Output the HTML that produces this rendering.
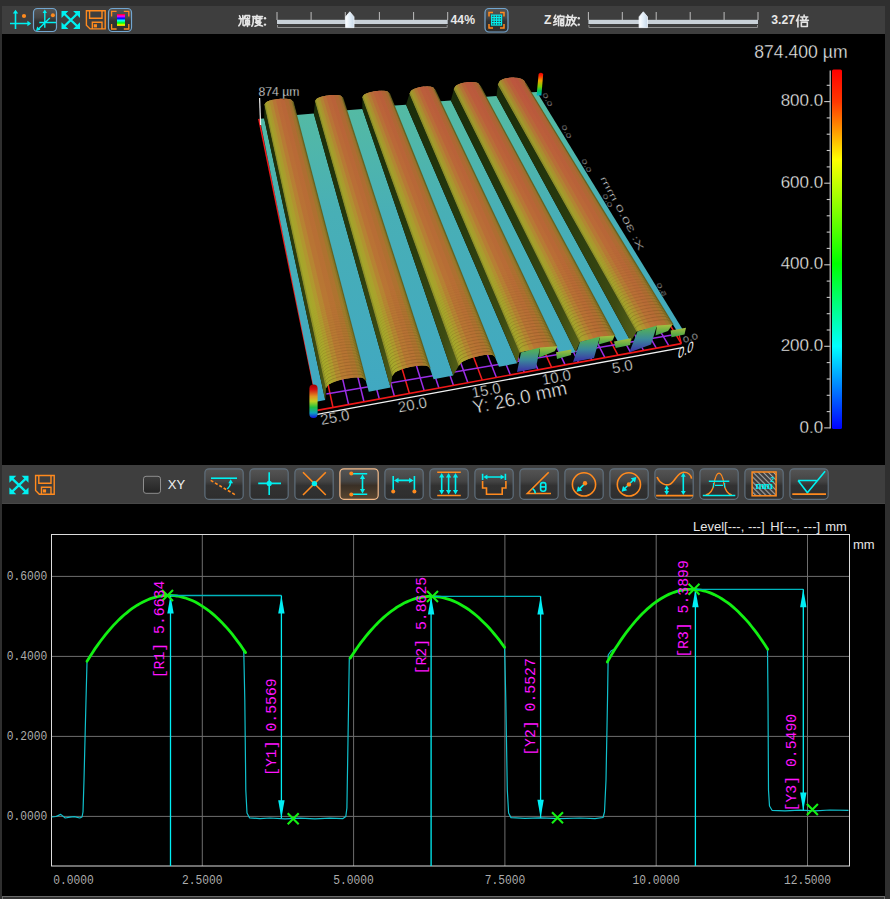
<!DOCTYPE html>
<html><head><meta charset="utf-8"><style>
html,body{margin:0;padding:0;background:#2f2f2f;}
body{width:890px;height:899px;overflow:hidden;position:relative;}
svg{position:absolute;left:0;top:0;}
</style></head><body>
<svg width="890" height="899" viewBox="0 0 890 899">
<defs>
<linearGradient id="gbtn" x1="0" y1="0" x2="0" y2="1">
<stop offset="0" stop-color="#555555"/><stop offset="0.4" stop-color="#444444"/><stop offset="0.55" stop-color="#323232"/><stop offset="1" stop-color="#2e2e2e"/></linearGradient>
<linearGradient id="gbsel" x1="0" y1="0" x2="0" y2="1">
<stop offset="0" stop-color="#555555"/><stop offset="0.4" stop-color="#444444"/><stop offset="0.55" stop-color="#3a3026"/><stop offset="1" stop-color="#5a4630"/></linearGradient>
<linearGradient id="gchk" x1="0" y1="0" x2="0" y2="1"><stop offset="0" stop-color="#3e3e3e"/><stop offset="1" stop-color="#242424"/></linearGradient>
<linearGradient id="gthumb" x1="0" y1="0" x2="1" y2="0"><stop offset="0" stop-color="#ffffff"/><stop offset="0.5" stop-color="#e2eef8"/><stop offset="1" stop-color="#c8d8e8"/></linearGradient>
<linearGradient id="grain" x1="0" y1="0" x2="0" y2="1">
<stop offset="0" stop-color="#ff0000"/><stop offset="0.18" stop-color="#ff00ff"/><stop offset="0.36" stop-color="#0000ff"/><stop offset="0.55" stop-color="#00ffff"/><stop offset="0.75" stop-color="#00ff00"/><stop offset="0.9" stop-color="#e0ff00"/><stop offset="1" stop-color="#ffa000"/></linearGradient>
<pattern id="hatch" width="3.6" height="4" patternUnits="userSpaceOnUse" patternTransform="rotate(-45)">
<rect width="3.6" height="4" fill="#3c3c3c"/><rect width="1.1" height="4" fill="#a8a8a8"/></pattern>
<linearGradient id="gcbs" x1="0" y1="0" x2="0" y2="1"><stop offset="0" stop-color="#e00000"/><stop offset="0.12" stop-color="#ff2000"/><stop offset="0.35" stop-color="#f0a000"/><stop offset="0.6" stop-color="#80d000"/><stop offset="0.8" stop-color="#00c060"/><stop offset="1" stop-color="#00b0d0"/></linearGradient>
<linearGradient id="glens" x1="0" y1="0" x2="0" y2="1"><stop offset="0" stop-color="#a8c040"/><stop offset="1" stop-color="#3ca048"/></linearGradient>
<linearGradient id="gteal" gradientUnits="userSpaceOnUse" x1="0" y1="90" x2="0" y2="400"><stop offset="0" stop-color="#56bca0"/><stop offset="0.4" stop-color="#48afb6"/><stop offset="1" stop-color="#40a8c2"/></linearGradient>
<linearGradient id="gwall" x1="0" y1="0" x2="1" y2="0"><stop offset="0" stop-color="#1a2c0a"/><stop offset="0.5" stop-color="#283a0e"/><stop offset="0.85" stop-color="#3c4a12"/><stop offset="1" stop-color="#525e18"/></linearGradient>
<linearGradient id="gleg" x1="0" y1="0" x2="0" y2="1"><stop offset="0" stop-color="#58b848"/><stop offset="0.5" stop-color="#3a8a9a"/><stop offset="1" stop-color="#3c2ca8"/></linearGradient>
<linearGradient id="gcb" x1="0" y1="0" x2="0" y2="1"><stop offset="0" stop-color="#a00000"/><stop offset="0.15" stop-color="#d01010"/><stop offset="0.35" stop-color="#e09020"/><stop offset="0.5" stop-color="#c0d020"/><stop offset="0.68" stop-color="#20c040"/><stop offset="0.85" stop-color="#10a0c0"/><stop offset="1" stop-color="#1010e0"/></linearGradient>
<linearGradient id="gcbig" x1="0" y1="0" x2="0" y2="1"><stop offset="0" stop-color="#ff0000"/><stop offset="0.09" stop-color="#ff3800"/><stop offset="0.15" stop-color="#ff8000"/><stop offset="0.25" stop-color="#ffff00"/><stop offset="0.54" stop-color="#00ff00"/><stop offset="0.77" stop-color="#00ffff"/><stop offset="1" stop-color="#0000ff"/></linearGradient>
<linearGradient id="gb1_0" x1="0" y1="0" x2="0" y2="1"><stop offset="0" stop-color="#8e8f28"/><stop offset="0.2" stop-color="#8f9128"/><stop offset="0.5" stop-color="#909427"/><stop offset="1" stop-color="#919627"/></linearGradient>
<linearGradient id="gb1_1" x1="0" y1="0" x2="0" y2="1"><stop offset="0" stop-color="#a39f2b"/><stop offset="0.2" stop-color="#a3a22b"/><stop offset="0.5" stop-color="#a5a62b"/><stop offset="1" stop-color="#a6aa2a"/></linearGradient>
<linearGradient id="gb1_2" x1="0" y1="0" x2="0" y2="1"><stop offset="0" stop-color="#aa962e"/><stop offset="0.2" stop-color="#aa9b2d"/><stop offset="0.5" stop-color="#aaa22c"/><stop offset="1" stop-color="#aaa92b"/></linearGradient>
<linearGradient id="gb1_3" x1="0" y1="0" x2="0" y2="1"><stop offset="0" stop-color="#b18732"/><stop offset="0.2" stop-color="#b18e31"/><stop offset="0.5" stop-color="#b0962f"/><stop offset="1" stop-color="#af9e2e"/></linearGradient>
<linearGradient id="gb1_4" x1="0" y1="0" x2="0" y2="1"><stop offset="0" stop-color="#b77536"/><stop offset="0.2" stop-color="#b77c34"/><stop offset="0.5" stop-color="#b68432"/><stop offset="1" stop-color="#b58b31"/></linearGradient>
<linearGradient id="gb1_5" x1="0" y1="0" x2="0" y2="1"><stop offset="0" stop-color="#ba6838"/><stop offset="0.2" stop-color="#b96e36"/><stop offset="0.5" stop-color="#b87434"/><stop offset="1" stop-color="#b87b32"/></linearGradient>
<linearGradient id="gb1_6" x1="0" y1="0" x2="0" y2="1"><stop offset="0" stop-color="#b86538"/><stop offset="0.2" stop-color="#b86a36"/><stop offset="0.5" stop-color="#b76f34"/><stop offset="1" stop-color="#b67532"/></linearGradient>
<linearGradient id="gb1_7" x1="0" y1="0" x2="0" y2="1"><stop offset="0" stop-color="#b06833"/><stop offset="0.2" stop-color="#af6c32"/><stop offset="0.5" stop-color="#af7130"/><stop offset="1" stop-color="#ae762f"/></linearGradient>
<linearGradient id="gb1_8" x1="0" y1="0" x2="0" y2="1"><stop offset="0" stop-color="#a16f2e"/><stop offset="0.2" stop-color="#a0742d"/><stop offset="0.5" stop-color="#9f782b"/><stop offset="1" stop-color="#9e7d2a"/></linearGradient>
<linearGradient id="gb1_9" x1="0" y1="0" x2="0" y2="1"><stop offset="0" stop-color="#8d7029"/><stop offset="0.2" stop-color="#8b7328"/><stop offset="0.5" stop-color="#897626"/><stop offset="1" stop-color="#877925"/></linearGradient>
<linearGradient id="gb2_0" x1="0" y1="0" x2="0" y2="1"><stop offset="0" stop-color="#8d8e28"/><stop offset="0.2" stop-color="#8e9028"/><stop offset="0.5" stop-color="#8f9327"/><stop offset="1" stop-color="#919527"/></linearGradient>
<linearGradient id="gb2_1" x1="0" y1="0" x2="0" y2="1"><stop offset="0" stop-color="#a29c2c"/><stop offset="0.2" stop-color="#a3a02b"/><stop offset="0.5" stop-color="#a4a42b"/><stop offset="1" stop-color="#a5a92a"/></linearGradient>
<linearGradient id="gb2_2" x1="0" y1="0" x2="0" y2="1"><stop offset="0" stop-color="#aa922f"/><stop offset="0.2" stop-color="#aa982e"/><stop offset="0.5" stop-color="#aa9f2d"/><stop offset="1" stop-color="#aaa72c"/></linearGradient>
<linearGradient id="gb2_3" x1="0" y1="0" x2="0" y2="1"><stop offset="0" stop-color="#b28233"/><stop offset="0.2" stop-color="#b18a32"/><stop offset="0.5" stop-color="#b09330"/><stop offset="1" stop-color="#b09c2e"/></linearGradient>
<linearGradient id="gb2_4" x1="0" y1="0" x2="0" y2="1"><stop offset="0" stop-color="#b87137"/><stop offset="0.2" stop-color="#b77835"/><stop offset="0.5" stop-color="#b68133"/><stop offset="1" stop-color="#b58931"/></linearGradient>
<linearGradient id="gb2_5" x1="0" y1="0" x2="0" y2="1"><stop offset="0" stop-color="#ba6539"/><stop offset="0.2" stop-color="#b96b37"/><stop offset="0.5" stop-color="#b97235"/><stop offset="1" stop-color="#b87933"/></linearGradient>
<linearGradient id="gb2_6" x1="0" y1="0" x2="0" y2="1"><stop offset="0" stop-color="#b96139"/><stop offset="0.2" stop-color="#b86737"/><stop offset="0.5" stop-color="#b76d35"/><stop offset="1" stop-color="#b67333"/></linearGradient>
<linearGradient id="gb2_7" x1="0" y1="0" x2="0" y2="1"><stop offset="0" stop-color="#b06634"/><stop offset="0.2" stop-color="#b06a33"/><stop offset="0.5" stop-color="#af6f31"/><stop offset="1" stop-color="#ae742f"/></linearGradient>
<linearGradient id="gb2_8" x1="0" y1="0" x2="0" y2="1"><stop offset="0" stop-color="#a26d2f"/><stop offset="0.2" stop-color="#a1712d"/><stop offset="0.5" stop-color="#9f762c"/><stop offset="1" stop-color="#9e7c2a"/></linearGradient>
<linearGradient id="gb2_9" x1="0" y1="0" x2="0" y2="1"><stop offset="0" stop-color="#8f6e2a"/><stop offset="0.2" stop-color="#8c7129"/><stop offset="0.5" stop-color="#8a7527"/><stop offset="1" stop-color="#887825"/></linearGradient>
<linearGradient id="gb3_0" x1="0" y1="0" x2="0" y2="1"><stop offset="0" stop-color="#8c8d28"/><stop offset="0.2" stop-color="#8d8f28"/><stop offset="0.5" stop-color="#8f9228"/><stop offset="1" stop-color="#909527"/></linearGradient>
<linearGradient id="gb3_1" x1="0" y1="0" x2="0" y2="1"><stop offset="0" stop-color="#a19a2c"/><stop offset="0.2" stop-color="#a29e2b"/><stop offset="0.5" stop-color="#a4a32b"/><stop offset="1" stop-color="#a5a82a"/></linearGradient>
<linearGradient id="gb3_2" x1="0" y1="0" x2="0" y2="1"><stop offset="0" stop-color="#aa8e30"/><stop offset="0.2" stop-color="#aa952e"/><stop offset="0.5" stop-color="#aa9d2d"/><stop offset="1" stop-color="#aaa52c"/></linearGradient>
<linearGradient id="gb3_3" x1="0" y1="0" x2="0" y2="1"><stop offset="0" stop-color="#b27d34"/><stop offset="0.2" stop-color="#b18632"/><stop offset="0.5" stop-color="#b19031"/><stop offset="1" stop-color="#b09a2f"/></linearGradient>
<linearGradient id="gb3_4" x1="0" y1="0" x2="0" y2="1"><stop offset="0" stop-color="#b86c38"/><stop offset="0.2" stop-color="#b77436"/><stop offset="0.5" stop-color="#b67e34"/><stop offset="1" stop-color="#b68732"/></linearGradient>
<linearGradient id="gb3_5" x1="0" y1="0" x2="0" y2="1"><stop offset="0" stop-color="#bb613a"/><stop offset="0.2" stop-color="#ba6838"/><stop offset="0.5" stop-color="#b96f36"/><stop offset="1" stop-color="#b87733"/></linearGradient>
<linearGradient id="gb3_6" x1="0" y1="0" x2="0" y2="1"><stop offset="0" stop-color="#b95e3a"/><stop offset="0.2" stop-color="#b86438"/><stop offset="0.5" stop-color="#b76b36"/><stop offset="1" stop-color="#b77233"/></linearGradient>
<linearGradient id="gb3_7" x1="0" y1="0" x2="0" y2="1"><stop offset="0" stop-color="#b16335"/><stop offset="0.2" stop-color="#b06834"/><stop offset="0.5" stop-color="#af6d32"/><stop offset="1" stop-color="#ae7330"/></linearGradient>
<linearGradient id="gb3_8" x1="0" y1="0" x2="0" y2="1"><stop offset="0" stop-color="#a36a30"/><stop offset="0.2" stop-color="#a16f2e"/><stop offset="0.5" stop-color="#a0752c"/><stop offset="1" stop-color="#9f7a2b"/></linearGradient>
<linearGradient id="gb3_9" x1="0" y1="0" x2="0" y2="1"><stop offset="0" stop-color="#906c2b"/><stop offset="0.2" stop-color="#8e6f29"/><stop offset="0.5" stop-color="#8b7327"/><stop offset="1" stop-color="#887726"/></linearGradient>
<linearGradient id="gb4_0" x1="0" y1="0" x2="0" y2="1"><stop offset="0" stop-color="#8b8b28"/><stop offset="0.2" stop-color="#8d8e28"/><stop offset="0.5" stop-color="#8e9128"/><stop offset="1" stop-color="#909427"/></linearGradient>
<linearGradient id="gb4_1" x1="0" y1="0" x2="0" y2="1"><stop offset="0" stop-color="#a1982c"/><stop offset="0.2" stop-color="#a29c2c"/><stop offset="0.5" stop-color="#a3a12b"/><stop offset="1" stop-color="#a5a62b"/></linearGradient>
<linearGradient id="gb4_2" x1="0" y1="0" x2="0" y2="1"><stop offset="0" stop-color="#aa8a30"/><stop offset="0.2" stop-color="#aa922f"/><stop offset="0.5" stop-color="#aa9a2e"/><stop offset="1" stop-color="#aaa32c"/></linearGradient>
<linearGradient id="gb4_3" x1="0" y1="0" x2="0" y2="1"><stop offset="0" stop-color="#b37835"/><stop offset="0.2" stop-color="#b28233"/><stop offset="0.5" stop-color="#b18c31"/><stop offset="1" stop-color="#b0972f"/></linearGradient>
<linearGradient id="gb4_4" x1="0" y1="0" x2="0" y2="1"><stop offset="0" stop-color="#b96839"/><stop offset="0.2" stop-color="#b87137"/><stop offset="0.5" stop-color="#b77b35"/><stop offset="1" stop-color="#b68532"/></linearGradient>
<linearGradient id="gb4_5" x1="0" y1="0" x2="0" y2="1"><stop offset="0" stop-color="#bb5d3c"/><stop offset="0.2" stop-color="#ba6439"/><stop offset="0.5" stop-color="#b96d37"/><stop offset="1" stop-color="#b87534"/></linearGradient>
<linearGradient id="gb4_6" x1="0" y1="0" x2="0" y2="1"><stop offset="0" stop-color="#b95b3c"/><stop offset="0.2" stop-color="#b96139"/><stop offset="0.5" stop-color="#b86937"/><stop offset="1" stop-color="#b77034"/></linearGradient>
<linearGradient id="gb4_7" x1="0" y1="0" x2="0" y2="1"><stop offset="0" stop-color="#b16036"/><stop offset="0.2" stop-color="#b06634"/><stop offset="0.5" stop-color="#af6c32"/><stop offset="1" stop-color="#af7230"/></linearGradient>
<linearGradient id="gb4_8" x1="0" y1="0" x2="0" y2="1"><stop offset="0" stop-color="#a36730"/><stop offset="0.2" stop-color="#a26d2f"/><stop offset="0.5" stop-color="#a0732d"/><stop offset="1" stop-color="#9f792b"/></linearGradient>
<linearGradient id="gb4_9" x1="0" y1="0" x2="0" y2="1"><stop offset="0" stop-color="#916a2c"/><stop offset="0.2" stop-color="#8f6e2a"/><stop offset="0.5" stop-color="#8c7228"/><stop offset="1" stop-color="#897626"/></linearGradient>
<linearGradient id="gb5_0" x1="0" y1="0" x2="0" y2="1"><stop offset="0" stop-color="#8b8a28"/><stop offset="0.2" stop-color="#8c8d28"/><stop offset="0.5" stop-color="#8e9028"/><stop offset="1" stop-color="#909327"/></linearGradient>
<linearGradient id="gb5_1" x1="0" y1="0" x2="0" y2="1"><stop offset="0" stop-color="#a0962c"/><stop offset="0.2" stop-color="#a19a2c"/><stop offset="0.5" stop-color="#a3a02b"/><stop offset="1" stop-color="#a4a52b"/></linearGradient>
<linearGradient id="gb5_2" x1="0" y1="0" x2="0" y2="1"><stop offset="0" stop-color="#aa8631"/><stop offset="0.2" stop-color="#aa8e2f"/><stop offset="0.5" stop-color="#aa982e"/><stop offset="1" stop-color="#aaa12d"/></linearGradient>
<linearGradient id="gb5_3" x1="0" y1="0" x2="0" y2="1"><stop offset="0" stop-color="#b37436"/><stop offset="0.2" stop-color="#b27e34"/><stop offset="0.5" stop-color="#b18932"/><stop offset="1" stop-color="#b09530"/></linearGradient>
<linearGradient id="gb5_4" x1="0" y1="0" x2="0" y2="1"><stop offset="0" stop-color="#b9633a"/><stop offset="0.2" stop-color="#b86d38"/><stop offset="0.5" stop-color="#b77835"/><stop offset="1" stop-color="#b68333"/></linearGradient>
<linearGradient id="gb5_5" x1="0" y1="0" x2="0" y2="1"><stop offset="0" stop-color="#bb593d"/><stop offset="0.2" stop-color="#bb613a"/><stop offset="0.5" stop-color="#ba6a37"/><stop offset="1" stop-color="#b97434"/></linearGradient>
<linearGradient id="gb5_6" x1="0" y1="0" x2="0" y2="1"><stop offset="0" stop-color="#ba583d"/><stop offset="0.2" stop-color="#b95e3a"/><stop offset="0.5" stop-color="#b86637"/><stop offset="1" stop-color="#b76e34"/></linearGradient>
<linearGradient id="gb5_7" x1="0" y1="0" x2="0" y2="1"><stop offset="0" stop-color="#b15e37"/><stop offset="0.2" stop-color="#b06335"/><stop offset="0.5" stop-color="#b06a33"/><stop offset="1" stop-color="#af7031"/></linearGradient>
<linearGradient id="gb5_8" x1="0" y1="0" x2="0" y2="1"><stop offset="0" stop-color="#a46531"/><stop offset="0.2" stop-color="#a26a30"/><stop offset="0.5" stop-color="#a1712d"/><stop offset="1" stop-color="#9f782b"/></linearGradient>
<linearGradient id="gb5_9" x1="0" y1="0" x2="0" y2="1"><stop offset="0" stop-color="#92682d"/><stop offset="0.2" stop-color="#906c2b"/><stop offset="0.5" stop-color="#8d7129"/><stop offset="1" stop-color="#8a7526"/></linearGradient>
<linearGradient id="gb6_0" x1="0" y1="0" x2="0" y2="1"><stop offset="0" stop-color="#8a8928"/><stop offset="0.2" stop-color="#8c8c28"/><stop offset="0.5" stop-color="#8d8f28"/><stop offset="1" stop-color="#8f9328"/></linearGradient>
<linearGradient id="gb6_1" x1="0" y1="0" x2="0" y2="1"><stop offset="0" stop-color="#a0942d"/><stop offset="0.2" stop-color="#a1992c"/><stop offset="0.5" stop-color="#a29e2b"/><stop offset="1" stop-color="#a4a42b"/></linearGradient>
<linearGradient id="gb6_2" x1="0" y1="0" x2="0" y2="1"><stop offset="0" stop-color="#aa8231"/><stop offset="0.2" stop-color="#aa8b30"/><stop offset="0.5" stop-color="#aa952e"/><stop offset="1" stop-color="#aa9f2d"/></linearGradient>
<linearGradient id="gb6_3" x1="0" y1="0" x2="0" y2="1"><stop offset="0" stop-color="#b36f37"/><stop offset="0.2" stop-color="#b27935"/><stop offset="0.5" stop-color="#b18632"/><stop offset="1" stop-color="#b09330"/></linearGradient>
<linearGradient id="gb6_4" x1="0" y1="0" x2="0" y2="1"><stop offset="0" stop-color="#b95f3b"/><stop offset="0.2" stop-color="#b86939"/><stop offset="0.5" stop-color="#b77536"/><stop offset="1" stop-color="#b68033"/></linearGradient>
<linearGradient id="gb6_5" x1="0" y1="0" x2="0" y2="1"><stop offset="0" stop-color="#bc563e"/><stop offset="0.2" stop-color="#bb5e3b"/><stop offset="0.5" stop-color="#ba6838"/><stop offset="1" stop-color="#b97235"/></linearGradient>
<linearGradient id="gb6_6" x1="0" y1="0" x2="0" y2="1"><stop offset="0" stop-color="#ba543e"/><stop offset="0.2" stop-color="#b95c3b"/><stop offset="0.5" stop-color="#b86438"/><stop offset="1" stop-color="#b76d35"/></linearGradient>
<linearGradient id="gb6_7" x1="0" y1="0" x2="0" y2="1"><stop offset="0" stop-color="#b25b38"/><stop offset="0.2" stop-color="#b16136"/><stop offset="0.5" stop-color="#b06834"/><stop offset="1" stop-color="#af6f31"/></linearGradient>
<linearGradient id="gb6_8" x1="0" y1="0" x2="0" y2="1"><stop offset="0" stop-color="#a56232"/><stop offset="0.2" stop-color="#a36830"/><stop offset="0.5" stop-color="#a16f2e"/><stop offset="1" stop-color="#a0762c"/></linearGradient>
<linearGradient id="gb6_9" x1="0" y1="0" x2="0" y2="1"><stop offset="0" stop-color="#93662e"/><stop offset="0.2" stop-color="#916a2c"/><stop offset="0.5" stop-color="#8d6f29"/><stop offset="1" stop-color="#8a7427"/></linearGradient></defs>
<rect x="0" y="0" width="890" height="899" fill="#2f2f2f"/>
<rect x="2" y="34" width="883" height="431" fill="#000"/>
<rect x="2" y="504" width="883" height="392" fill="#000"/>
<rect x="2.5" y="896.5" width="882" height="10" fill="#333" stroke="#6a6a6a" stroke-width="1"/>
<rect x="2" y="6" width="883" height="28" fill="#3e3e3e"/>
<rect x="2" y="465" width="883" height="39" fill="#3e3e3e"/><rect x="2" y="503" width="883" height="1" fill="#474747"/>
<path d="M15.5,13 V29 M10,23.5 H28" stroke="#00f0f0" stroke-width="1.6"/>
<path d="M15.5,9.8 L12.8,13.6 H18.2 Z M31.2,23.5 L27.4,20.8 V26.2 Z" fill="#00f0f0"/>
<circle cx="24" cy="16" r="2.1" fill="#ff8a1e"/>
<rect x="33.5" y="8.5" width="23" height="23" rx="4" fill="url(#gbtn)" stroke="#72a6d0" stroke-width="1.2"/>
<path d="M44.8,12.5 V27.8 M39.3,22.5 H56 M49.8,18 L38.5,29" stroke="#00f0f0" stroke-width="1.4"/>
<path d="M44.8,9.6 L42.6,13 H47 Z M36,31 L37.2,26.6 L40.4,29.8 Z" fill="#00f0f0"/>
<circle cx="52.9" cy="15.2" r="2" fill="#ff8a1e"/>
<path d="M64.0,13.5 L77.5,26.5 M77.5,13.5 L64.0,26.5" stroke="#00f0f0" stroke-width="2.3"/><path d="M61.5,11 L68.375,11 L61.5,17.875 Z" fill="#00f0f0"/><path d="M80.0,11 L73.125,11 L80.0,17.875 Z" fill="#00f0f0"/><path d="M61.5,29 L68.375,29 L61.5,22.125 Z" fill="#00f0f0"/><path d="M80.0,29 L73.125,29 L80.0,22.125 Z" fill="#00f0f0"/>
<path d="M86.39999999999999,10.8 H105.2 V28.9 H90.1 L86.39999999999999,25.2 Z" fill="none" stroke="#ff8a1e" stroke-width="1.4"/><path d="M89.6,10.8 V18.274 H102.0 V10.8" fill="none" stroke="#ff8a1e" stroke-width="1.4"/><path d="M92.332,28.9 V22.214 H102.0 V28.9" fill="none" stroke="#ff8a1e" stroke-width="1.4"/><rect x="93.75999999999999" y="24.183999999999997" width="3.2" height="3.2" fill="#ff8a1e"/>
<rect x="108.5" y="8.5" width="23" height="23" rx="4" fill="url(#gbtn)" stroke="#72a6d0" stroke-width="1.2"/>
<path d="M111.6,16.4 V11.4 H116.6 M123.79999999999998,11.4 H128.79999999999998 V16.4 M128.79999999999998,24.0 V29.0 H123.79999999999998 M116.6,29.0 H111.6 V24.0" fill="none" stroke="#ff8a1e" stroke-width="1.3"/>
<rect x="117" y="14" width="8" height="12" fill="url(#grain)"/>
<path transform="translate(238,14.6) scale(1.0)" d="M1.5,1.2 L2.3,3 M4.8,1 L4.8,3.2 M7,1.2 L6.4,3 M1,4.2 H6.8 M3,4.2 V6.5 Q2.8,9.5 0.8,11.2 M5,4.2 V10.5 Q5,11.2 6.8,11 M7.2,1 H11.6 V2.6 M7.2,1 V2.6 M7.5,4.2 H11.5 M9.5,3 V11.8 M7.6,6 H11.4 L11.4,8.6 H7.6 Z M7,10.2 H11.8" fill="none" stroke="#e4e4e4" stroke-width="1.60" stroke-linecap="round" stroke-linejoin="round"/>
<path transform="translate(251,14.6) scale(1.0)" d="M6,0.6 V1.8 M1.6,2 H11.5 M2.2,2 V7 Q2,10 0.8,11.6 M3.8,4 H11 M5.2,3 V6.5 M9,3 V6.5 M5.2,6.2 H9 M4.5,7.8 H10 Q8.5,10.5 4,11.6 M5.5,8.5 Q8,10.8 11.5,11.4" fill="none" stroke="#e4e4e4" stroke-width="1.60" stroke-linecap="round" stroke-linejoin="round"/>
<circle cx="265" cy="18.2" r="1.2" fill="#e4e4e4"/><circle cx="265" cy="24.6" r="1.2" fill="#e4e4e4"/>
<rect x="277" y="19.8" width="170.7" height="4.2" fill="#c9d1d8"/>
<line x1="277.0" y1="12" x2="277.0" y2="20" stroke="#bdbdbd" stroke-width="1"/>
<line x1="311.1" y1="12" x2="311.1" y2="20" stroke="#bdbdbd" stroke-width="1"/>
<line x1="345.3" y1="12" x2="345.3" y2="20" stroke="#bdbdbd" stroke-width="1"/>
<line x1="379.4" y1="12" x2="379.4" y2="20" stroke="#bdbdbd" stroke-width="1"/>
<line x1="413.6" y1="12" x2="413.6" y2="20" stroke="#bdbdbd" stroke-width="1"/>
<line x1="447.7" y1="12" x2="447.7" y2="20" stroke="#bdbdbd" stroke-width="1"/>
<path d="M277.5,25 V27.5 H447.2 V25" fill="none" stroke="#8e8e8e" stroke-width="1"/>
<path d="M345.6,27.6 V16.8 L349.8,11.8 L354.0,16.8 V27.6 Z" fill="url(#gthumb)" stroke="#f0f6fc" stroke-width="0.8"/>
<text x="450.6" y="24" font-family="Liberation Sans" font-weight="bold" font-size="12.2" fill="#e8e8e8">44%</text>
<rect x="485.0" y="8.5" width="23" height="23.5" rx="4" fill="url(#gbtn)" stroke="#72a6d0" stroke-width="1.2"/>
<path d="M489,16.5 V12.5 H493 M500,12.5 H504 V16.5 M504,24.0 V28.0 H500 M493,28.0 H489 V24.0" fill="none" stroke="#ff8a1e" stroke-width="1.5"/>
<g stroke="#00f0f0" stroke-width="1.1" fill="none"><rect x="491.6" y="15.1" width="10" height="10"/><path d="M494.1,15.1 V25.1 M496.6,15.1 V25.1 M499.1,15.1 V25.1 M491.6,17.6 H501.6 M491.6,20.1 H501.6 M491.6,22.6 H501.6"/></g>
<text x="544" y="24.2" font-family="Liberation Sans" font-weight="bold" font-size="12.2" fill="#e8e8e8">Z</text>
<path transform="translate(552.8,14.6) scale(0.9666666666666667)" d="M3,0.6 L1.2,3.8 L3.6,4.2 L1,8 L4,7.2 M0.8,10.8 L4,9.6 M7.8,0.6 V1.6 M5,3 V1.8 H11.6 V3 M6.4,3.6 L5.4,6 M6,5.2 V11.6 M8,4.6 H11.6 M9.2,4.8 L8.8,6 M8.2,6.2 H11.2 V11.4 H8.2 Z M8.2,8.8 H11.2" fill="none" stroke="#e4e4e4" stroke-width="1.66" stroke-linecap="round" stroke-linejoin="round"/>
<path transform="translate(565.2,14.6) scale(0.9666666666666667)" d="M2.6,0.6 L3.4,1.8 M0.8,2.6 H5.8 M2.4,2.6 V5.4 H5 Q5,10 3.4,11.4 L2.6,11 M2.4,5.4 Q2.4,9.6 0.6,11.6 M7.6,0.6 Q7,3.6 5.8,5.6 M7,3 H11.6 M10.4,3.2 Q9.6,8.4 6,11.6 M7.2,5 Q8.6,9.4 11.8,11.4" fill="none" stroke="#e4e4e4" stroke-width="1.66" stroke-linecap="round" stroke-linejoin="round"/>
<circle cx="578.8" cy="18.2" r="1.2" fill="#e4e4e4"/><circle cx="578.8" cy="24.6" r="1.2" fill="#e4e4e4"/>
<rect x="588.4" y="19.8" width="169.60000000000002" height="4.2" fill="#c9d1d8"/>
<line x1="588.4" y1="12" x2="588.4" y2="20" stroke="#bdbdbd" stroke-width="1"/>
<line x1="622.3" y1="12" x2="622.3" y2="20" stroke="#bdbdbd" stroke-width="1"/>
<line x1="656.2" y1="12" x2="656.2" y2="20" stroke="#bdbdbd" stroke-width="1"/>
<line x1="690.2" y1="12" x2="690.2" y2="20" stroke="#bdbdbd" stroke-width="1"/>
<line x1="724.1" y1="12" x2="724.1" y2="20" stroke="#bdbdbd" stroke-width="1"/>
<line x1="758.0" y1="12" x2="758.0" y2="20" stroke="#bdbdbd" stroke-width="1"/>
<path d="M588.9,25 V27.5 H757.5 V25" fill="none" stroke="#8e8e8e" stroke-width="1"/>
<path d="M639.0999999999999,27.6 V16.8 L643.3,11.8 L647.5,16.8 V27.6 Z" fill="url(#gthumb)" stroke="#f0f6fc" stroke-width="0.8"/>
<text x="771.3" y="24.2" font-family="Liberation Sans" font-weight="bold" font-size="12.2" fill="#e8e8e8">3.27</text>
<path transform="translate(795.8,14.4) scale(1.0666666666666667)" d="M3,0.6 Q2,4 0.6,6 M2,4 V11.8 M7.8,0.6 V1.8 M4.6,2.4 H11.2 M6,3.2 L6.8,5 M10,3.2 L9.2,5 M4.2,5.6 H11.8 M5.2,7.4 H10.8 V11.4 H5.2 Z" fill="none" stroke="#e4e4e4" stroke-width="1.50" stroke-linecap="round" stroke-linejoin="round"/>
<path d="M11.9,478.3 L26.0,491.8 M26.0,478.3 L11.9,491.8" stroke="#00f0f0" stroke-width="2.3"/><path d="M9.4,475.8 L16.275,475.8 L9.4,482.675 Z" fill="#00f0f0"/><path d="M28.5,475.8 L21.625,475.8 L28.5,482.675 Z" fill="#00f0f0"/><path d="M9.4,494.3 L16.275,494.3 L9.4,487.425 Z" fill="#00f0f0"/><path d="M28.5,494.3 L21.625,494.3 L28.5,487.425 Z" fill="#00f0f0"/>
<path d="M35.599999999999994,475.5 H54.2 V494.2 H39.3 L35.599999999999994,490.5 Z" fill="none" stroke="#ff8a1e" stroke-width="1.4"/><path d="M38.8,475.5 V483.226 H51.0 V475.5" fill="none" stroke="#ff8a1e" stroke-width="1.4"/><path d="M41.465999999999994,494.2 V487.286 H51.0 V494.2" fill="none" stroke="#ff8a1e" stroke-width="1.4"/><rect x="42.879999999999995" y="489.316" width="3.2" height="3.2" fill="#ff8a1e"/>
<rect x="143.5" y="476.3" width="17" height="17" rx="2.5" fill="url(#gchk)" stroke="#8e8e8e" stroke-width="1"/>
<text x="167.8" y="489.4" font-family="Liberation Sans" font-size="13" fill="#f0f0f0">XY</text>
<rect x="204.9" y="468.8" width="38.3" height="30.5" rx="4" fill="url(#gbtn)" stroke="#5f6f7c" stroke-width="1.2"/>
<rect x="249.9" y="468.8" width="38.3" height="30.5" rx="4" fill="url(#gbtn)" stroke="#5f6f7c" stroke-width="1.2"/>
<rect x="294.9" y="468.8" width="38.3" height="30.5" rx="4" fill="url(#gbtn)" stroke="#5f6f7c" stroke-width="1.2"/>
<rect x="339.9" y="468.8" width="38.3" height="30.5" rx="4" fill="url(#gbsel)" stroke="#f2ba8a" stroke-width="1.2"/>
<rect x="384.9" y="468.8" width="38.3" height="30.5" rx="4" fill="url(#gbtn)" stroke="#5f6f7c" stroke-width="1.2"/>
<rect x="429.9" y="468.8" width="38.3" height="30.5" rx="4" fill="url(#gbtn)" stroke="#5f6f7c" stroke-width="1.2"/>
<rect x="474.9" y="468.8" width="38.3" height="30.5" rx="4" fill="url(#gbtn)" stroke="#5f6f7c" stroke-width="1.2"/>
<rect x="519.9" y="468.8" width="38.3" height="30.5" rx="4" fill="url(#gbtn)" stroke="#5f6f7c" stroke-width="1.2"/>
<rect x="564.9" y="468.8" width="38.3" height="30.5" rx="4" fill="url(#gbtn)" stroke="#5f6f7c" stroke-width="1.2"/>
<rect x="609.9" y="468.8" width="38.3" height="30.5" rx="4" fill="url(#gbtn)" stroke="#5f6f7c" stroke-width="1.2"/>
<rect x="654.9" y="468.8" width="38.3" height="30.5" rx="4" fill="url(#gbtn)" stroke="#5f6f7c" stroke-width="1.2"/>
<rect x="699.9" y="468.8" width="38.3" height="30.5" rx="4" fill="url(#gbtn)" stroke="#5f6f7c" stroke-width="1.2"/>
<rect x="744.9" y="468.8" width="38.3" height="30.5" rx="4" fill="url(#gbtn)" stroke="#5f6f7c" stroke-width="1.2"/>
<rect x="789.9" y="468.8" width="38.3" height="30.5" rx="4" fill="url(#gbtn)" stroke="#5f6f7c" stroke-width="1.2"/>
<path d="M211,478.2 H237" stroke="#00f0f0" stroke-width="1.6" fill="none"/>
<path d="M210.7,480.4 L234.9,494.6" stroke="#ff8a1e" stroke-width="1.6" stroke-dasharray="3,2"/>
<path d="M227.3,489 Q230.6,486 230.7,482.5" stroke="#00f0f0" stroke-width="1.6" fill="none"/>
<path d="M230.70,479.20 L233.10,483.20 L228.30,483.20 Z" fill="#00f0f0"/>
<path d="M269.2,472.2 V495 M258.2,483.4 H281" stroke="#00f0f0" stroke-width="1.6" fill="none"/>
<circle cx="269.2" cy="483.4" r="2.6" fill="#00f0f0"/>
<path d="M303,472.2 L325.8,495 M325.8,472.2 L303,495" stroke="#ff8a1e" stroke-width="1.6" fill="none"/>
<circle cx="314.4" cy="483.6" r="2.7" fill="#00f0f0"/>
<path d="M351.5,473.8 H367.2 M351.5,494.2 H367.2 M362.5,477 V491" stroke="#00f0f0" stroke-width="1.6" fill="none"/>
<path d="M362.50,474.50 L365.10,479.00 L359.90,479.00 Z" fill="#00f0f0"/><path d="M362.50,493.50 L359.90,489.00 L365.10,489.00 Z" fill="#00f0f0"/>
<circle cx="351.3" cy="473.6" r="2" fill="#ff8a1e"/><circle cx="351.3" cy="494.4" r="2" fill="#ff8a1e"/>
<path d="M393.2,476 V491 M414.4,476 V491 M396,480.4 H411.6" stroke="#00f0f0" stroke-width="1.6" fill="none"/>
<path d="M394.00,480.40 L398.50,477.80 L398.50,483.00 Z" fill="#00f0f0"/><path d="M413.60,480.40 L409.10,483.00 L409.10,477.80 Z" fill="#00f0f0"/>
<circle cx="393.2" cy="491.4" r="2" fill="#ff8a1e"/><circle cx="414.4" cy="491.4" r="2" fill="#ff8a1e"/>
<path d="M437.2,472.2 H460.8 M437.2,495.5 H460.8" stroke="#ff8a1e" stroke-width="1.6" fill="none"/>
<path d="M441.7,476 V492" stroke="#00f0f0" stroke-width="1.6" fill="none"/>
<path d="M441.70,473.00 L444.30,477.50 L439.10,477.50 Z" fill="#00f0f0"/><path d="M441.70,494.60 L439.10,490.10 L444.30,490.10 Z" fill="#00f0f0"/>
<path d="M448.6,476 V492" stroke="#00f0f0" stroke-width="1.6" fill="none"/>
<path d="M448.60,473.00 L451.20,477.50 L446.00,477.50 Z" fill="#00f0f0"/><path d="M448.60,494.60 L446.00,490.10 L451.20,490.10 Z" fill="#00f0f0"/>
<path d="M455.5,476 V492" stroke="#00f0f0" stroke-width="1.6" fill="none"/>
<path d="M455.50,473.00 L458.10,477.50 L452.90,477.50 Z" fill="#00f0f0"/><path d="M455.50,494.60 L452.90,490.10 L458.10,490.10 Z" fill="#00f0f0"/>
<path d="M482.6,473.8 V480.1 M505.4,473.8 V480.1 M485,477 H503" stroke="#00f0f0" stroke-width="1.6" fill="none"/>
<path d="M483.40,477.00 L487.40,474.60 L487.40,479.40 Z" fill="#00f0f0"/><path d="M504.60,477.00 L500.60,479.40 L500.60,474.60 Z" fill="#00f0f0"/>
<path d="M482.6,481 V488 H486.5 V494.2 H502.2 V488 H505.9 V481" stroke="#ff8a1e" stroke-width="1.6" fill="none"/>
<path d="M548.7,472.2 L527.4,493.5 H551" stroke="#ff8a1e" stroke-width="1.6" fill="none"/>
<path d="M532.6,488.6 Q535.5,490.5 535.2,493.3" stroke="#00f0f0" stroke-width="1.6" fill="none"/>
<rect x="540.6" y="482.6" width="5.2" height="8.6" rx="2.2" stroke="#00f0f0" stroke-width="1.6" fill="none"/><path d="M540.6,486.9 H545.8" stroke="#00f0f0" stroke-width="1.6" fill="none"/>
<circle cx="584" cy="484.4" r="11.6" stroke="#ff8a1e" stroke-width="1.6" fill="none"/>
<path d="M584,484.4 L578.5,489.9" stroke="#00f0f0" stroke-width="1.6" fill="none"/>
<path d="M576.60,491.80 L578.01,486.14 L582.26,490.39 Z" fill="#00f0f0"/>
<circle cx="585" cy="483.3" r="2.2" fill="#ff8a1e"/>
<circle cx="628.9" cy="484.4" r="11.6" stroke="#ff8a1e" stroke-width="1.6" fill="none"/>
<path d="M624.5,488.8 L633.3,480" stroke="#00f0f0" stroke-width="1.6" fill="none"/>
<path d="M621.60,491.70 L623.01,486.04 L627.26,490.29 Z" fill="#00f0f0"/><path d="M636.40,476.90 L634.99,482.56 L630.74,478.31 Z" fill="#00f0f0"/>
<circle cx="628.9" cy="484.4" r="2.2" fill="#ff8a1e"/>
<path d="M657,477 C660,484 666,486 670,484.2 C675,482 677,472.5 683.7,472.3 C688,472.2 691,475 691.6,478.6" stroke="#ff8a1e" stroke-width="1.6" fill="none"/>
<path d="M656.1,495.6 H693.1" stroke="#ff8a1e" stroke-width="1.8"/>
<path d="M666.7,488 V492.5 M683.3,476 V492.5" stroke="#00f0f0" stroke-width="1.6" fill="none"/>
<path d="M666.70,485.20 L669.10,489.20 L664.30,489.20 Z" fill="#00f0f0"/><path d="M666.70,495.00 L664.30,491.00 L669.10,491.00 Z" fill="#00f0f0"/>
<path d="M683.30,472.80 L685.70,476.80 L680.90,476.80 Z" fill="#00f0f0"/><path d="M683.30,495.00 L680.90,491.00 L685.70,491.00 Z" fill="#00f0f0"/>
<path d="M705.7,495 C711,494 713,489 714,484 C715,478 716.2,473.2 719,473.2 C721.8,473.2 723,478 724,484 C725,489 727,494 731.8,495" stroke="#ff8a1e" stroke-width="1.3" fill="none"/>
<path d="M708.8,481.3 H729.3 M702.8,495.5 H735.3" stroke="#00f0f0" stroke-width="1.6"/>
<path d="M713.5,483 V487.5 M724.6,483 V487.5 M715,485.3 H723" stroke="#00f0f0" stroke-width="1.2"/>
<rect x="752.1" y="472" width="24" height="23.8" fill="url(#hatch)"/>
<rect x="752.1" y="472" width="24" height="23.8" fill="none" stroke="#ff8a1e" stroke-width="1.5"/>
<text x="755.5" y="488.5" font-family="Liberation Serif" font-size="11" fill="#00f0f0" font-weight="bold" letter-spacing="-0.8">mm</text>
<text x="770.2" y="481.5" font-family="Liberation Sans" font-size="7" fill="#00f0f0" font-weight="bold">2</text>
<path d="M798.1,480.5 H816.7 M798.1,480.5 L807.4,492.7 L825.1,471.3" stroke="#00f0f0" stroke-width="1.6" fill="none" stroke-linejoin="miter"/>
<path d="M792.3,494.2 H826" stroke="#ff8a1e" stroke-width="1.7"/>
<g>
<line x1="681.3" y1="343.6" x2="657.2" y2="303.6" stroke="#ee1c1c" stroke-width="1.5"/>
<line x1="668.9" y1="345.9" x2="645.3" y2="305.9" stroke="#9a2ee6" stroke-width="1.5"/>
<line x1="656.3" y1="348.2" x2="633.3" y2="308.2" stroke="#9a2ee6" stroke-width="1.5"/>
<line x1="643.6" y1="350.5" x2="621.3" y2="310.5" stroke="#9a2ee6" stroke-width="1.5"/>
<line x1="630.8" y1="352.9" x2="609.1" y2="312.9" stroke="#9a2ee6" stroke-width="1.5"/>
<line x1="617.9" y1="355.2" x2="596.8" y2="315.2" stroke="#ee1c1c" stroke-width="1.5"/>
<line x1="604.9" y1="357.6" x2="584.4" y2="317.6" stroke="#9a2ee6" stroke-width="1.5"/>
<line x1="591.8" y1="360.0" x2="571.8" y2="320.0" stroke="#9a2ee6" stroke-width="1.5"/>
<line x1="578.5" y1="362.5" x2="559.2" y2="322.5" stroke="#9a2ee6" stroke-width="1.5"/>
<line x1="565.1" y1="364.9" x2="546.4" y2="324.9" stroke="#9a2ee6" stroke-width="1.5"/>
<line x1="551.6" y1="367.4" x2="533.5" y2="327.4" stroke="#ee1c1c" stroke-width="1.5"/>
<line x1="538.0" y1="369.9" x2="520.5" y2="329.9" stroke="#9a2ee6" stroke-width="1.5"/>
<line x1="524.3" y1="372.4" x2="507.4" y2="332.4" stroke="#9a2ee6" stroke-width="1.5"/>
<line x1="510.4" y1="375.0" x2="494.1" y2="335.0" stroke="#9a2ee6" stroke-width="1.5"/>
<line x1="496.4" y1="377.5" x2="480.7" y2="337.5" stroke="#9a2ee6" stroke-width="1.5"/>
<line x1="482.2" y1="380.1" x2="467.2" y2="340.1" stroke="#ee1c1c" stroke-width="1.5"/>
<line x1="467.9" y1="382.8" x2="453.5" y2="342.8" stroke="#9a2ee6" stroke-width="1.5"/>
<line x1="453.5" y1="385.4" x2="439.7" y2="345.4" stroke="#9a2ee6" stroke-width="1.5"/>
<line x1="438.9" y1="388.1" x2="425.8" y2="348.1" stroke="#9a2ee6" stroke-width="1.5"/>
<line x1="424.2" y1="390.8" x2="411.8" y2="350.8" stroke="#9a2ee6" stroke-width="1.5"/>
<line x1="409.4" y1="393.5" x2="397.6" y2="353.5" stroke="#ee1c1c" stroke-width="1.5"/>
<line x1="394.4" y1="396.2" x2="383.2" y2="356.2" stroke="#9a2ee6" stroke-width="1.5"/>
<line x1="379.3" y1="399.0" x2="368.7" y2="359.0" stroke="#9a2ee6" stroke-width="1.5"/>
<line x1="364.0" y1="401.8" x2="354.1" y2="361.8" stroke="#9a2ee6" stroke-width="1.5"/>
<line x1="348.6" y1="404.7" x2="339.3" y2="364.7" stroke="#9a2ee6" stroke-width="1.5"/>
<line x1="333.0" y1="407.5" x2="324.4" y2="367.5" stroke="#ee1c1c" stroke-width="1.5"/>
<line x1="326.3" y1="393.9" x2="681" y2="333.4" stroke="#9a2ee6" stroke-width="1.5"/>
<line x1="317.2" y1="410.4" x2="681.3" y2="343.6" stroke="#f01818" stroke-width="1.6"/>
<line x1="317.2" y1="414.4" x2="682.3" y2="347.6" stroke="#f2f2f2" stroke-width="1.4"/>
</g>
<line x1="258.8" y1="118.8" x2="313.3" y2="384.5" stroke="#f01818" stroke-width="1.5"/>
<path d="M681.3,343.6 L678.3,331.6" stroke="#f01818" stroke-width="1.5"/>
<path d="M259.8,118.8 L264.2,118.4 L325.2,400.1 L316.4,401.8 Z" fill="url(#gteal)"/>
<path d="M293.5,115.3 L313.8,113.6 L390.5,387.6 L368.8,391.7 Z" fill="url(#gteal)"/>
<path d="M343.7,110.4 L362.4,108.9 L453.2,375.6 L433.6,379.3 Z" fill="url(#gteal)"/>
<path d="M391.3,105.8 L406.1,104.7 L517.2,363.3 L499.0,366.8 Z" fill="url(#gteal)"/>
<path d="M437.3,101.4 L450.9,100.4 L575.6,352.1 L560.7,355.0 Z" fill="url(#gteal)"/>
<path d="M483.0,97.0 L496.5,96.0 L630.7,341.6 L619.1,343.8 Z" fill="url(#gteal)"/>
<path d="M528.2,92.6 L536.9,92.1 L683.9,331.4 L677.9,332.5 Z" fill="url(#gteal)"/>
<path d="M264.2,118.4 L264.6,104.3 L326.0,387.9 L325.2,400.1 Z" fill="url(#gwall)"/>
<path d="M264.6,104.3 L326.0,387.9 L328.5,384.6 L331.0,383.2 L333.5,382.1 L336.0,381.2 L338.5,380.4 L341.0,379.7 L343.4,379.2 L345.9,378.6 L348.4,378.2 L350.9,377.9 L353.4,377.6 L355.9,377.4 L358.4,377.4 L360.8,377.5 L363.3,378.0 L365.8,380.4 L365.8,380.4 L293.0,101.6 L291.2,99.7 L289.4,99.1 L287.6,98.9 L285.9,98.7 L284.1,98.7 L282.3,98.7 L280.5,98.8 L278.8,98.9 L277.0,99.1 L275.2,99.4 L273.5,99.7 L271.7,100.1 L269.9,100.6 L268.1,101.2 L266.4,102.0 L264.6,104.3 Z" fill="#b08a48"/>
<path d="M264.6,104.3 L265.3,103.4 L266.0,102.5 L328.0,385.2 L327.0,386.6 L326.0,387.9 Z" fill="url(#gb1_0)"/>
<path d="M265.4,103.2 L266.6,101.9 L267.7,101.4 L330.4,383.5 L328.8,384.4 L327.2,386.3 Z" fill="url(#gb1_1)"/>
<path d="M267.2,101.6 L268.6,101.0 L270.0,100.5 L333.6,382.1 L331.6,382.9 L329.6,384.0 Z" fill="url(#gb1_2)"/>
<path d="M269.4,100.7 L271.1,100.2 L272.8,99.8 L337.6,380.7 L335.2,381.5 L332.8,382.4 Z" fill="url(#gb1_3)"/>
<path d="M272.3,99.9 L274.2,99.5 L276.2,99.2 L342.3,379.4 L339.6,380.1 L336.8,380.9 Z" fill="url(#gb1_4)"/>
<path d="M275.7,99.3 L278.1,99.0 L280.5,98.8 L348.3,378.2 L344.9,378.9 L341.6,379.6 Z" fill="url(#gb1_5)"/>
<path d="M279.9,98.8 L282.3,98.7 L284.7,98.7 L354.3,377.5 L350.9,377.9 L347.5,378.4 Z" fill="url(#gb1_6)"/>
<path d="M284.2,98.7 L286.4,98.8 L288.7,99.0 L359.8,377.5 L356.7,377.4 L353.5,377.6 Z" fill="url(#gb1_7)"/>
<path d="M288.1,98.9 L289.7,99.2 L291.3,99.7 L363.4,378.1 L361.2,377.6 L359.1,377.4 Z" fill="url(#gb1_8)"/>
<path d="M290.7,99.5 L291.8,100.4 L293.0,101.6 L365.8,380.4 L364.2,378.9 L362.6,377.9 Z" fill="url(#gb1_9)"/>
<path d="M325.4,384.7 L329.3,380.5 L333.3,378.7 L337.2,377.4 L341.2,376.3 L345.2,375.5 L349.1,374.8 L353.1,374.4 L357.1,374.2 L361.0,374.5 L365.0,377.2" fill="none" stroke="#4a3410" stroke-width="0.8" opacity="0.29"/>
<path d="M324.7,381.6 L328.6,377.4 L332.6,375.6 L336.5,374.2 L340.5,373.2 L344.4,372.3 L348.4,371.7 L352.3,371.2 L356.3,371.1 L360.2,371.4 L364.2,374.1" fill="none" stroke="#4a3410" stroke-width="0.8" opacity="0.28"/>
<path d="M324.0,378.5 L327.9,374.2 L331.9,372.5 L335.8,371.1 L339.7,370.1 L343.7,369.2 L347.6,368.6 L351.5,368.1 L355.5,368.0 L359.4,368.2 L363.3,371.0" fill="none" stroke="#4a3410" stroke-width="0.8" opacity="0.26"/>
<path d="M323.3,375.4 L327.3,371.2 L331.2,369.4 L335.1,368.1 L339.0,367.0 L342.9,366.2 L346.9,365.5 L350.8,365.1 L354.7,364.9 L358.6,365.2 L362.5,367.9" fill="none" stroke="#4a3410" stroke-width="0.8" opacity="0.25"/>
<path d="M322.7,372.4 L326.6,368.2 L330.5,366.4 L334.4,365.0 L338.3,364.0 L342.2,363.1 L346.1,362.5 L350.0,362.0 L353.9,361.9 L357.8,362.2 L361.8,364.9" fill="none" stroke="#4a3410" stroke-width="0.8" opacity="0.24"/>
<path d="M322.0,369.4 L325.9,365.2 L329.8,363.4 L333.7,362.1 L337.6,361.0 L341.5,360.1 L345.4,359.5 L349.3,359.1 L353.2,358.9 L357.1,359.2 L361.0,361.9" fill="none" stroke="#4a3410" stroke-width="0.8" opacity="0.23"/>
<path d="M321.4,366.4 L325.3,362.2 L329.2,360.4 L333.0,359.1 L336.9,358.0 L340.8,357.2 L344.7,356.5 L348.6,356.1 L352.4,355.9 L356.3,356.2 L360.2,358.9" fill="none" stroke="#4a3410" stroke-width="0.8" opacity="0.22"/>
<path d="M320.8,363.5 L324.6,359.3 L328.5,357.5 L332.4,356.2 L336.2,355.1 L340.1,354.3 L344.0,353.6 L347.8,353.2 L351.7,353.0 L355.6,353.3 L359.4,356.0" fill="none" stroke="#4a3410" stroke-width="0.8" opacity="0.21"/>
<path d="M320.1,360.7 L324.0,356.4 L327.9,354.7 L331.7,353.3 L335.6,352.3 L339.4,351.4 L343.3,350.8 L347.1,350.3 L351.0,350.2 L354.8,350.4 L358.7,353.2" fill="none" stroke="#4a3410" stroke-width="0.8" opacity="0.20"/>
<path d="M319.5,357.8 L323.4,353.6 L327.2,351.8 L331.1,350.5 L334.9,349.4 L338.7,348.6 L342.6,347.9 L346.4,347.5 L350.3,347.3 L354.1,347.6 L358.0,350.3" fill="none" stroke="#4a3410" stroke-width="0.8" opacity="0.18"/>
<path d="M318.9,355.0 L322.8,350.8 L326.6,349.0 L330.4,347.7 L334.2,346.6 L338.1,345.8 L341.9,345.1 L345.7,344.7 L349.6,344.5 L353.4,344.8 L357.2,347.5" fill="none" stroke="#4a3410" stroke-width="0.8" opacity="0.17"/>
<path d="M318.3,352.3 L322.1,348.0 L326.0,346.3 L329.8,344.9 L333.6,343.9 L337.4,343.0 L341.2,342.4 L345.0,341.9 L348.9,341.8 L352.7,342.0 L356.5,344.8" fill="none" stroke="#4a3410" stroke-width="0.8" opacity="0.16"/>
<path d="M317.7,349.5 L321.5,345.3 L325.3,343.5 L329.2,342.2 L333.0,341.1 L336.8,340.3 L340.6,339.6 L344.4,339.2 L348.2,339.0 L352.0,339.3 L355.8,342.0" fill="none" stroke="#4a3410" stroke-width="0.8" opacity="0.15"/>
<path d="M317.2,346.9 L320.9,342.6 L324.7,340.9 L328.5,339.5 L332.3,338.5 L336.1,337.6 L339.9,337.0 L343.7,336.5 L347.5,336.4 L351.3,336.6 L355.1,339.4" fill="none" stroke="#4a3410" stroke-width="0.8" opacity="0.14"/>
<path d="M316.6,344.2 L320.4,340.0 L324.1,338.2 L327.9,336.9 L331.7,335.8 L335.5,335.0 L339.3,334.3 L343.1,333.9 L346.8,333.7 L350.6,334.0 L354.4,336.7" fill="none" stroke="#4a3410" stroke-width="0.8" opacity="0.13"/>
<path d="M316.0,341.6 L319.8,337.4 L323.6,335.6 L327.3,334.3 L331.1,333.2 L334.9,332.4 L338.6,331.7 L342.4,331.3 L346.2,331.1 L349.9,331.4 L353.7,334.1" fill="none" stroke="#4a3410" stroke-width="0.8" opacity="0.12"/>
<path d="M315.5,339.0 L319.2,334.8 L323.0,333.0 L326.7,331.7 L330.5,330.6 L334.3,329.8 L338.0,329.1 L341.8,328.7 L345.5,328.5 L349.3,328.8 L353.0,331.5" fill="none" stroke="#4a3410" stroke-width="0.8" opacity="0.11"/>
<path d="M314.9,336.5 L318.7,332.3 L322.4,330.5 L326.2,329.2 L329.9,328.1 L333.6,327.3 L337.4,326.6 L341.1,326.2 L344.9,326.0 L348.6,326.3 L352.4,329.0" fill="none" stroke="#4a3410" stroke-width="0.8" opacity="0.10"/>
<path d="M314.4,334.0 L318.1,329.8 L321.8,328.0 L325.6,326.7 L329.3,325.6 L333.1,324.8 L336.8,324.1 L340.5,323.7 L344.3,323.5 L348.0,323.8 L351.7,326.5" fill="none" stroke="#4a3410" stroke-width="0.8" opacity="0.09"/>
<path d="M313.8,331.6 L317.6,327.4 L321.3,325.6 L325.0,324.2 L328.7,323.2 L332.5,322.3 L336.2,321.7 L339.9,321.2 L343.6,321.1 L347.4,321.4 L351.1,324.1" fill="none" stroke="#4a3410" stroke-width="0.8" opacity="0.08"/>
<path d="M313.3,329.2 L317.0,324.9 L320.7,323.2 L324.5,321.8 L328.2,320.8 L331.9,319.9 L335.6,319.3 L339.3,318.8 L343.0,318.7 L346.7,318.9 L350.5,321.7" fill="none" stroke="#4a3410" stroke-width="0.8" opacity="0.07"/>
<path d="M312.8,326.8 L316.5,322.6 L320.2,320.8 L323.9,319.5 L327.6,318.4 L331.3,317.5 L335.0,316.9 L338.7,316.5 L342.4,316.3 L346.1,316.6 L349.8,319.3" fill="none" stroke="#4a3410" stroke-width="0.8" opacity="0.06"/>
<path d="M312.3,324.5 L316.0,320.2 L319.7,318.5 L323.4,317.1 L327.1,316.1 L330.8,315.2 L334.5,314.6 L338.2,314.1 L341.8,314.0 L345.5,314.2 L349.2,317.0" fill="none" stroke="#4a3410" stroke-width="0.8" opacity="0.05"/>
<path d="M311.8,322.2 L315.5,317.9 L319.2,316.2 L322.9,314.8 L326.5,313.8 L330.2,312.9 L333.9,312.3 L337.6,311.8 L341.3,311.7 L344.9,311.9 L348.6,314.7" fill="none" stroke="#4a3410" stroke-width="0.8" opacity="0.04"/>
<path d="M311.3,319.9 L315.0,315.7 L318.7,313.9 L322.3,312.6 L326.0,311.5 L329.7,310.6 L333.3,310.0 L337.0,309.6 L340.7,309.4 L344.4,309.7 L348.0,312.4" fill="none" stroke="#4a3410" stroke-width="0.8" opacity="0.03"/>
<path d="M310.8,317.7 L314.5,313.5 L318.2,311.7 L321.8,310.3 L325.5,309.3 L329.1,308.4 L332.8,307.8 L336.5,307.3 L340.1,307.2 L343.8,307.5 L347.5,310.2" fill="none" stroke="#4a3410" stroke-width="0.8" opacity="0.03"/>
<path d="M310.4,315.5 L314.0,311.3 L317.7,309.5 L321.3,308.2 L325.0,307.1 L328.6,306.2 L332.3,305.6 L335.9,305.2 L339.6,305.0 L343.2,305.3 L346.9,308.0" fill="none" stroke="#4a3410" stroke-width="0.8" opacity="0.02"/>
<path d="M309.9,313.4 L313.5,309.1 L317.2,307.4 L320.8,306.0 L324.5,305.0 L328.1,304.1 L331.8,303.5 L335.4,303.0 L339.0,302.9 L342.7,303.1 L346.3,305.9" fill="none" stroke="#4a3410" stroke-width="0.8" opacity="0.01"/>
<path d="M309.4,311.2 L313.1,307.0 L316.7,305.2 L320.3,303.9 L324.0,302.8 L327.6,302.0 L331.2,301.3 L334.9,300.9 L338.5,300.7 L342.1,301.0 L345.8,303.7" fill="none" stroke="#4a3410" stroke-width="0.8" opacity="0.01"/>
<line x1="264.6" y1="104.3" x2="326.0" y2="387.9" stroke="#8c9428" stroke-width="1" opacity="0.35"/>
<line x1="293.0" y1="101.6" x2="365.8" y2="380.4" stroke="#5a5a1c" stroke-width="1.2" opacity="0.8"/>
<path d="M313.8,113.6 L315.2,100.7 L392.3,376.0 L390.5,387.6 Z" fill="url(#gwall)"/>
<path d="M315.2,100.7 L392.3,376.0 L394.6,372.7 L397.0,371.3 L399.4,370.2 L401.7,369.3 L404.1,368.5 L406.5,367.8 L408.8,367.3 L411.2,366.8 L413.6,366.3 L415.9,366.0 L418.3,365.7 L420.7,365.5 L423.0,365.5 L425.4,365.6 L427.8,366.1 L430.1,368.5 L430.1,368.5 L342.5,97.4 L340.8,95.7 L339.1,95.2 L337.4,95.0 L335.7,94.9 L334.0,94.9 L332.3,95.0 L330.6,95.1 L328.8,95.3 L327.1,95.5 L325.4,95.8 L323.7,96.2 L322.0,96.6 L320.3,97.1 L318.6,97.7 L316.9,98.5 L315.2,100.7 Z" fill="#b08a48"/>
<path d="M315.2,100.7 L315.9,99.8 L316.6,99.0 L394.2,373.3 L393.2,374.7 L392.3,376.0 Z" fill="url(#gb2_0)"/>
<path d="M316.0,99.7 L317.1,98.4 L318.2,97.9 L396.4,371.6 L394.9,372.5 L393.4,374.4 Z" fill="url(#gb2_1)"/>
<path d="M317.7,98.2 L319.0,97.6 L320.4,97.1 L399.5,370.2 L397.6,371.0 L395.7,372.1 Z" fill="url(#gb2_2)"/>
<path d="M319.8,97.3 L321.5,96.7 L323.1,96.3 L403.3,368.8 L401.0,369.6 L398.7,370.5 Z" fill="url(#gb2_3)"/>
<path d="M322.6,96.4 L324.5,96.0 L326.4,95.7 L407.8,367.5 L405.2,368.2 L402.5,369.0 Z" fill="url(#gb2_4)"/>
<path d="M325.8,95.8 L328.2,95.4 L330.5,95.1 L413.5,366.3 L410.3,367.0 L407.0,367.7 Z" fill="url(#gb2_5)"/>
<path d="M329.9,95.2 L332.3,95.0 L334.6,94.9 L419.2,365.6 L415.9,366.0 L412.7,366.5 Z" fill="url(#gb2_6)"/>
<path d="M334.0,94.9 L336.2,95.0 L338.4,95.1 L424.5,365.6 L421.4,365.5 L418.4,365.7 Z" fill="url(#gb2_7)"/>
<path d="M337.9,95.1 L339.4,95.3 L340.9,95.7 L427.9,366.2 L425.8,365.7 L423.7,365.5 Z" fill="url(#gb2_8)"/>
<path d="M340.3,95.5 L341.4,96.3 L342.5,97.4 L430.1,368.5 L428.6,367.0 L427.1,366.0 Z" fill="url(#gb2_9)"/>
<path d="M391.4,372.8 L395.2,368.6 L398.9,366.8 L402.7,365.5 L406.5,364.4 L410.3,363.6 L414.0,362.9 L417.8,362.5 L421.6,362.3 L425.3,362.6 L429.1,365.3" fill="none" stroke="#4a3410" stroke-width="0.8" opacity="0.29"/>
<path d="M390.5,369.7 L394.3,365.5 L398.0,363.7 L401.8,362.3 L405.5,361.3 L409.3,360.4 L413.1,359.8 L416.8,359.3 L420.6,359.2 L424.3,359.5 L428.1,362.2" fill="none" stroke="#4a3410" stroke-width="0.8" opacity="0.28"/>
<path d="M389.6,366.6 L393.4,362.3 L397.1,360.6 L400.9,359.2 L404.6,358.2 L408.4,357.3 L412.1,356.7 L415.9,356.2 L419.6,356.1 L423.4,356.3 L427.1,359.1" fill="none" stroke="#4a3410" stroke-width="0.8" opacity="0.26"/>
<path d="M388.8,363.5 L392.5,359.3 L396.2,357.5 L400.0,356.2 L403.7,355.1 L407.4,354.3 L411.2,353.6 L414.9,353.2 L418.6,353.0 L422.4,353.3 L426.1,356.0" fill="none" stroke="#4a3410" stroke-width="0.8" opacity="0.25"/>
<path d="M387.9,360.5 L391.7,356.3 L395.4,354.5 L399.1,353.1 L402.8,352.1 L406.5,351.2 L410.3,350.6 L414.0,350.1 L417.7,350.0 L421.4,350.3 L425.1,353.0" fill="none" stroke="#4a3410" stroke-width="0.8" opacity="0.24"/>
<path d="M387.1,357.5 L390.8,353.3 L394.5,351.5 L398.2,350.2 L401.9,349.1 L405.6,348.2 L409.3,347.6 L413.0,347.2 L416.8,347.0 L420.5,347.3 L424.2,350.0" fill="none" stroke="#4a3410" stroke-width="0.8" opacity="0.23"/>
<path d="M386.3,354.5 L390.0,350.3 L393.7,348.5 L397.4,347.2 L401.0,346.1 L404.7,345.3 L408.4,344.6 L412.1,344.2 L415.8,344.0 L419.5,344.3 L423.2,347.0" fill="none" stroke="#4a3410" stroke-width="0.8" opacity="0.22"/>
<path d="M385.5,351.6 L389.1,347.4 L392.8,345.6 L396.5,344.3 L400.2,343.2 L403.9,342.4 L407.5,341.7 L411.2,341.3 L414.9,341.1 L418.6,341.4 L422.3,344.1" fill="none" stroke="#4a3410" stroke-width="0.8" opacity="0.21"/>
<path d="M384.7,348.8 L388.3,344.5 L392.0,342.8 L395.7,341.4 L399.3,340.4 L403.0,339.5 L406.7,338.9 L410.3,338.4 L414.0,338.3 L417.7,338.5 L421.3,341.3" fill="none" stroke="#4a3410" stroke-width="0.8" opacity="0.20"/>
<path d="M383.9,345.9 L387.5,341.7 L391.2,339.9 L394.8,338.6 L398.5,337.5 L402.1,336.7 L405.8,336.0 L409.5,335.6 L413.1,335.4 L416.8,335.7 L420.4,338.4" fill="none" stroke="#4a3410" stroke-width="0.8" opacity="0.18"/>
<path d="M383.1,343.1 L386.7,338.9 L390.4,337.1 L394.0,335.8 L397.7,334.7 L401.3,333.9 L404.9,333.2 L408.6,332.8 L412.2,332.6 L415.9,332.9 L419.5,335.6" fill="none" stroke="#4a3410" stroke-width="0.8" opacity="0.17"/>
<path d="M382.3,340.4 L385.9,336.1 L389.6,334.4 L393.2,333.0 L396.8,332.0 L400.5,331.1 L404.1,330.5 L407.7,330.0 L411.4,329.9 L415.0,330.1 L418.6,332.9" fill="none" stroke="#4a3410" stroke-width="0.8" opacity="0.16"/>
<path d="M381.5,337.6 L385.2,333.4 L388.8,331.6 L392.4,330.3 L396.0,329.2 L399.6,328.4 L403.3,327.7 L406.9,327.3 L410.5,327.1 L414.1,327.4 L417.7,330.1" fill="none" stroke="#4a3410" stroke-width="0.8" opacity="0.15"/>
<path d="M380.8,335.0 L384.4,330.7 L388.0,329.0 L391.6,327.6 L395.2,326.6 L398.8,325.7 L402.4,325.1 L406.1,324.6 L409.7,324.5 L413.3,324.7 L416.9,327.5" fill="none" stroke="#4a3410" stroke-width="0.8" opacity="0.14"/>
<path d="M380.0,332.3 L383.6,328.1 L387.2,326.3 L390.8,325.0 L394.4,323.9 L398.0,323.1 L401.6,322.4 L405.2,322.0 L408.8,321.8 L412.4,322.1 L416.0,324.8" fill="none" stroke="#4a3410" stroke-width="0.8" opacity="0.13"/>
<path d="M379.3,329.7 L382.9,325.5 L386.5,323.7 L390.1,322.4 L393.7,321.3 L397.3,320.5 L400.8,319.8 L404.4,319.4 L408.0,319.2 L411.6,319.5 L415.2,322.2" fill="none" stroke="#4a3410" stroke-width="0.8" opacity="0.12"/>
<path d="M378.6,327.1 L382.2,322.9 L385.8,321.1 L389.3,319.8 L392.9,318.7 L396.5,317.9 L400.1,317.2 L403.6,316.8 L407.2,316.6 L410.8,316.9 L414.4,319.6" fill="none" stroke="#4a3410" stroke-width="0.8" opacity="0.11"/>
<path d="M377.9,324.6 L381.5,320.4 L385.0,318.6 L388.6,317.3 L392.2,316.2 L395.7,315.4 L399.3,314.7 L402.8,314.3 L406.4,314.1 L410.0,314.4 L413.5,317.1" fill="none" stroke="#4a3410" stroke-width="0.8" opacity="0.10"/>
<path d="M377.2,322.1 L380.8,317.9 L384.3,316.1 L387.9,314.8 L391.4,313.7 L395.0,312.9 L398.5,312.2 L402.1,311.8 L405.6,311.6 L409.2,311.9 L412.7,314.6" fill="none" stroke="#4a3410" stroke-width="0.8" opacity="0.09"/>
<path d="M376.5,319.7 L380.1,315.5 L383.6,313.7 L387.1,312.3 L390.7,311.3 L394.2,310.4 L397.8,309.8 L401.3,309.3 L404.9,309.2 L408.4,309.5 L411.9,312.2" fill="none" stroke="#4a3410" stroke-width="0.8" opacity="0.08"/>
<path d="M375.8,317.3 L379.4,313.0 L382.9,311.3 L386.4,309.9 L390.0,308.9 L393.5,308.0 L397.0,307.4 L400.6,306.9 L404.1,306.8 L407.6,307.0 L411.2,309.8" fill="none" stroke="#4a3410" stroke-width="0.8" opacity="0.07"/>
<path d="M375.2,314.9 L378.7,310.7 L382.2,308.9 L385.7,307.6 L389.3,306.5 L392.8,305.6 L396.3,305.0 L399.8,304.6 L403.3,304.4 L406.9,304.7 L410.4,307.4" fill="none" stroke="#4a3410" stroke-width="0.8" opacity="0.06"/>
<path d="M374.5,312.6 L378.0,308.3 L381.5,306.6 L385.1,305.2 L388.6,304.2 L392.1,303.3 L395.6,302.7 L399.1,302.2 L402.6,302.1 L406.1,302.3 L409.6,305.1" fill="none" stroke="#4a3410" stroke-width="0.8" opacity="0.05"/>
<path d="M373.9,310.3 L377.4,306.0 L380.9,304.3 L384.4,302.9 L387.9,301.9 L391.4,301.0 L394.9,300.4 L398.4,299.9 L401.9,299.8 L405.4,300.0 L408.9,302.8" fill="none" stroke="#4a3410" stroke-width="0.8" opacity="0.04"/>
<path d="M373.2,308.0 L376.7,303.8 L380.2,302.0 L383.7,300.7 L387.2,299.6 L390.7,298.8 L394.2,298.1 L397.7,297.7 L401.2,297.5 L404.7,297.8 L408.2,300.5" fill="none" stroke="#4a3410" stroke-width="0.8" opacity="0.03"/>
<path d="M372.6,305.8 L376.1,301.6 L379.6,299.8 L383.1,298.4 L386.5,297.4 L390.0,296.5 L393.5,295.9 L397.0,295.4 L400.5,295.3 L404.0,295.6 L407.4,298.3" fill="none" stroke="#4a3410" stroke-width="0.8" opacity="0.03"/>
<path d="M372.0,303.6 L375.5,299.4 L379.0,297.6 L382.4,296.3 L385.9,295.2 L389.4,294.3 L392.8,293.7 L396.3,293.3 L399.8,293.1 L403.3,293.4 L406.7,296.1" fill="none" stroke="#4a3410" stroke-width="0.8" opacity="0.02"/>
<path d="M371.4,301.5 L374.9,297.2 L378.3,295.5 L381.8,294.1 L385.3,293.1 L388.7,292.2 L392.2,291.6 L395.7,291.1 L399.1,291.0 L402.6,291.2 L406.0,294.0" fill="none" stroke="#4a3410" stroke-width="0.8" opacity="0.01"/>
<path d="M370.8,299.3 L374.3,295.1 L377.7,293.3 L381.2,292.0 L384.6,290.9 L388.1,290.1 L391.5,289.4 L395.0,289.0 L398.5,288.8 L401.9,289.1 L405.4,291.8" fill="none" stroke="#4a3410" stroke-width="0.8" opacity="0.01"/>
<line x1="315.2" y1="100.7" x2="392.3" y2="376.0" stroke="#8c9428" stroke-width="1" opacity="0.35"/>
<line x1="342.5" y1="97.4" x2="430.1" y2="368.5" stroke="#5a5a1c" stroke-width="1.2" opacity="0.8"/>
<path d="M362.4,108.9 L362.4,97.0 L458.8,365.8 L453.2,375.6 Z" fill="url(#gwall)"/>
<path d="M362.4,97.0 L458.8,365.8 L461.1,362.7 L463.3,361.3 L465.6,360.2 L467.9,359.2 L470.1,358.4 L472.4,357.7 L474.7,357.0 L477.0,356.5 L479.2,355.9 L481.5,355.5 L483.8,355.1 L486.0,354.9 L488.3,354.7 L490.6,354.7 L492.8,355.0 L495.1,357.1 L495.1,357.1 L389.3,93.5 L387.6,91.6 L386.0,91.1 L384.3,90.8 L382.6,90.7 L380.9,90.7 L379.2,90.8 L377.5,90.9 L375.9,91.1 L374.2,91.3 L372.5,91.7 L370.8,92.0 L369.1,92.5 L367.4,93.0 L365.8,93.7 L364.1,94.6 L362.4,97.0 Z" fill="#b08a48"/>
<path d="M362.4,97.0 L363.1,96.0 L363.7,95.1 L460.6,363.3 L459.7,364.5 L458.8,365.8 Z" fill="url(#gb3_0)"/>
<path d="M363.2,95.9 L364.3,94.5 L365.4,93.9 L462.8,361.6 L461.3,362.5 L459.9,364.3 Z" fill="url(#gb3_1)"/>
<path d="M364.8,94.2 L366.2,93.5 L367.5,93.0 L465.7,360.1 L463.9,361.0 L462.1,362.0 Z" fill="url(#gb3_2)"/>
<path d="M367.0,93.2 L368.6,92.7 L370.2,92.2 L469.3,358.7 L467.2,359.5 L465.0,360.5 Z" fill="url(#gb3_3)"/>
<path d="M369.7,92.3 L371.5,91.9 L373.4,91.5 L473.7,357.3 L471.1,358.1 L468.6,359.0 Z" fill="url(#gb3_4)"/>
<path d="M372.9,91.6 L375.2,91.2 L377.5,90.9 L479.1,356.0 L476.1,356.7 L473.0,357.5 Z" fill="url(#gb3_5)"/>
<path d="M376.9,91.0 L379.2,90.8 L381.5,90.7 L484.6,355.1 L481.5,355.5 L478.4,356.1 Z" fill="url(#gb3_6)"/>
<path d="M381.0,90.7 L383.1,90.8 L385.3,91.0 L489.7,354.7 L486.8,354.8 L483.9,355.1 Z" fill="url(#gb3_7)"/>
<path d="M384.7,90.9 L386.2,91.2 L387.7,91.6 L492.9,355.1 L490.9,354.8 L488.9,354.7 Z" fill="url(#gb3_8)"/>
<path d="M387.2,91.4 L388.2,92.3 L389.3,93.5 L495.1,357.1 L493.7,355.8 L492.2,355.0 Z" fill="url(#gb3_9)"/>
<path d="M457.7,362.6 L461.3,358.6 L464.9,356.8 L468.5,355.4 L472.1,354.2 L475.7,353.3 L479.4,352.5 L483.0,351.9 L486.6,351.6 L490.2,351.6 L493.8,353.9" fill="none" stroke="#4a3410" stroke-width="0.8" opacity="0.29"/>
<path d="M456.5,359.5 L460.1,355.4 L463.7,353.6 L467.3,352.2 L471.0,351.1 L474.6,350.1 L478.2,349.3 L481.8,348.8 L485.4,348.4 L489.0,348.5 L492.6,350.8" fill="none" stroke="#4a3410" stroke-width="0.8" opacity="0.28"/>
<path d="M455.4,356.4 L459.0,352.3 L462.6,350.5 L466.2,349.1 L469.8,348.0 L473.4,347.0 L477.0,346.2 L480.6,345.7 L484.1,345.3 L487.7,345.4 L491.3,347.7" fill="none" stroke="#4a3410" stroke-width="0.8" opacity="0.26"/>
<path d="M454.3,353.3 L457.9,349.3 L461.5,347.5 L465.1,346.1 L468.6,344.9 L472.2,344.0 L475.8,343.2 L479.4,342.6 L482.9,342.3 L486.5,342.3 L490.1,344.6" fill="none" stroke="#4a3410" stroke-width="0.8" opacity="0.25"/>
<path d="M453.2,350.3 L456.8,346.3 L460.4,344.4 L463.9,343.0 L467.5,341.9 L471.1,340.9 L474.6,340.2 L478.2,339.6 L481.8,339.2 L485.3,339.3 L488.9,341.6" fill="none" stroke="#4a3410" stroke-width="0.8" opacity="0.24"/>
<path d="M452.2,347.3 L455.7,343.3 L459.3,341.5 L462.8,340.1 L466.4,338.9 L469.9,337.9 L473.5,337.2 L477.0,336.6 L480.6,336.2 L484.1,336.3 L487.7,338.6" fill="none" stroke="#4a3410" stroke-width="0.8" opacity="0.23"/>
<path d="M451.1,344.3 L454.6,340.3 L458.2,338.5 L461.7,337.1 L465.3,336.0 L468.8,335.0 L472.3,334.2 L475.9,333.6 L479.4,333.3 L483.0,333.4 L486.5,335.6" fill="none" stroke="#4a3410" stroke-width="0.8" opacity="0.22"/>
<path d="M450.1,341.4 L453.6,337.4 L457.1,335.6 L460.6,334.2 L464.2,333.0 L467.7,332.1 L471.2,331.3 L474.8,330.7 L478.3,330.4 L481.8,330.4 L485.3,332.7" fill="none" stroke="#4a3410" stroke-width="0.8" opacity="0.21"/>
<path d="M449.0,338.6 L452.5,334.5 L456.1,332.7 L459.6,331.3 L463.1,330.2 L466.6,329.2 L470.1,328.4 L473.6,327.8 L477.2,327.5 L480.7,327.6 L484.2,329.9" fill="none" stroke="#4a3410" stroke-width="0.8" opacity="0.20"/>
<path d="M448.0,335.7 L451.5,331.7 L455.0,329.9 L458.5,328.5 L462.0,327.3 L465.5,326.4 L469.0,325.6 L472.5,325.0 L476.0,324.7 L479.5,324.7 L483.0,327.0" fill="none" stroke="#4a3410" stroke-width="0.8" opacity="0.18"/>
<path d="M447.0,332.9 L450.5,328.9 L454.0,327.1 L457.5,325.7 L461.0,324.5 L464.5,323.6 L468.0,322.8 L471.4,322.2 L474.9,321.9 L478.4,321.9 L481.9,324.2" fill="none" stroke="#4a3410" stroke-width="0.8" opacity="0.17"/>
<path d="M446.0,330.2 L449.5,326.1 L453.0,324.3 L456.5,322.9 L459.9,321.8 L463.4,320.8 L466.9,320.0 L470.4,319.5 L473.9,319.1 L477.3,319.2 L480.8,321.5" fill="none" stroke="#4a3410" stroke-width="0.8" opacity="0.16"/>
<path d="M445.0,327.4 L448.5,323.4 L452.0,321.6 L455.4,320.2 L458.9,319.1 L462.4,318.1 L465.9,317.3 L469.3,316.7 L472.8,316.4 L476.3,316.5 L479.7,318.7" fill="none" stroke="#4a3410" stroke-width="0.8" opacity="0.15"/>
<path d="M444.1,324.8 L447.5,320.7 L451.0,318.9 L454.5,317.5 L457.9,316.4 L461.4,315.4 L464.8,314.6 L468.3,314.1 L471.7,313.7 L475.2,313.8 L478.6,316.1" fill="none" stroke="#4a3410" stroke-width="0.8" opacity="0.14"/>
<path d="M443.1,322.1 L446.6,318.1 L450.0,316.3 L453.5,314.9 L456.9,313.7 L460.4,312.8 L463.8,312.0 L467.3,311.4 L470.7,311.1 L474.1,311.1 L477.6,313.4" fill="none" stroke="#4a3410" stroke-width="0.8" opacity="0.13"/>
<path d="M442.2,319.5 L445.6,315.5 L449.1,313.7 L452.5,312.3 L455.9,311.1 L459.4,310.2 L462.8,309.4 L466.2,308.8 L469.7,308.5 L473.1,308.5 L476.5,310.8" fill="none" stroke="#4a3410" stroke-width="0.8" opacity="0.12"/>
<path d="M441.3,316.9 L444.7,312.9 L448.1,311.1 L451.5,309.7 L455.0,308.6 L458.4,307.6 L461.8,306.8 L465.2,306.2 L468.7,305.9 L472.1,306.0 L475.5,308.2" fill="none" stroke="#4a3410" stroke-width="0.8" opacity="0.11"/>
<path d="M440.4,314.4 L443.8,310.4 L447.2,308.6 L450.6,307.2 L454.0,306.0 L457.4,305.1 L460.8,304.3 L464.3,303.7 L467.7,303.4 L471.1,303.4 L474.5,305.7" fill="none" stroke="#4a3410" stroke-width="0.8" opacity="0.10"/>
<path d="M439.5,311.9 L442.9,307.9 L446.3,306.1 L449.7,304.7 L453.1,303.5 L456.5,302.6 L459.9,301.8 L463.3,301.2 L466.7,300.9 L470.1,300.9 L473.5,303.2" fill="none" stroke="#4a3410" stroke-width="0.8" opacity="0.09"/>
<path d="M438.6,309.5 L442.0,305.5 L445.4,303.6 L448.8,302.2 L452.2,301.1 L455.6,300.1 L458.9,299.4 L462.3,298.8 L465.7,298.4 L469.1,298.5 L472.5,300.8" fill="none" stroke="#4a3410" stroke-width="0.8" opacity="0.08"/>
<path d="M437.7,307.1 L441.1,303.0 L444.5,301.2 L447.9,299.8 L451.3,298.7 L454.6,297.7 L458.0,296.9 L461.4,296.4 L464.8,296.0 L468.2,296.1 L471.5,298.4" fill="none" stroke="#4a3410" stroke-width="0.8" opacity="0.07"/>
<path d="M436.9,304.7 L440.3,300.7 L443.6,298.9 L447.0,297.5 L450.4,296.3 L453.7,295.3 L457.1,294.6 L460.5,294.0 L463.9,293.6 L467.2,293.7 L470.6,296.0" fill="none" stroke="#4a3410" stroke-width="0.8" opacity="0.06"/>
<path d="M436.0,302.4 L439.4,298.3 L442.8,296.5 L446.1,295.1 L449.5,294.0 L452.8,293.0 L456.2,292.2 L459.6,291.6 L462.9,291.3 L466.3,291.4 L469.7,293.7" fill="none" stroke="#4a3410" stroke-width="0.8" opacity="0.05"/>
<path d="M435.2,300.1 L438.6,296.0 L441.9,294.2 L445.3,292.8 L448.6,291.7 L452.0,290.7 L455.3,289.9 L458.7,289.3 L462.0,289.0 L465.4,289.1 L468.7,291.4" fill="none" stroke="#4a3410" stroke-width="0.8" opacity="0.04"/>
<path d="M434.4,297.8 L437.8,293.8 L441.1,292.0 L444.4,290.6 L447.8,289.4 L451.1,288.5 L454.5,287.7 L457.8,287.1 L461.1,286.7 L464.5,286.8 L467.8,289.1" fill="none" stroke="#4a3410" stroke-width="0.8" opacity="0.03"/>
<path d="M433.6,295.6 L436.9,291.6 L440.3,289.7 L443.6,288.3 L446.9,287.2 L450.3,286.2 L453.6,285.5 L456.9,284.9 L460.3,284.5 L463.6,284.6 L466.9,286.9" fill="none" stroke="#4a3410" stroke-width="0.8" opacity="0.03"/>
<path d="M432.8,293.4 L436.2,289.4 L439.5,287.6 L442.8,286.2 L446.1,285.0 L449.4,284.0 L452.8,283.3 L456.1,282.7 L459.4,282.3 L462.7,282.4 L466.1,284.7" fill="none" stroke="#4a3410" stroke-width="0.8" opacity="0.02"/>
<path d="M432.1,291.3 L435.4,287.2 L438.7,285.4 L442.0,284.0 L445.3,282.9 L448.6,281.9 L451.9,281.1 L455.3,280.5 L458.6,280.2 L461.9,280.3 L465.2,282.6" fill="none" stroke="#4a3410" stroke-width="0.8" opacity="0.01"/>
<path d="M431.3,289.1 L434.6,285.1 L437.9,283.3 L441.2,281.9 L444.5,280.8 L447.8,279.8 L451.1,279.0 L454.4,278.4 L457.7,278.1 L461.0,278.2 L464.4,280.4" fill="none" stroke="#4a3410" stroke-width="0.8" opacity="0.01"/>
<line x1="362.4" y1="97.0" x2="458.8" y2="365.8" stroke="#8c9428" stroke-width="1" opacity="0.35"/>
<line x1="389.3" y1="93.5" x2="495.1" y2="357.1" stroke="#5a5a1c" stroke-width="1.2" opacity="0.8"/>
<path d="M406.1,104.7 L409.6,93.4 L519.8,352.5 L517.2,363.3 Z" fill="url(#gwall)"/>
<path d="M409.6,93.4 L519.8,352.5 L522.1,351.7 L524.5,351.2 L526.8,350.8 L529.1,350.4 L531.4,350.0 L533.7,349.6 L536.0,349.2 L538.3,348.8 L540.6,348.5 L542.9,348.2 L545.3,347.8 L547.6,347.5 L549.9,347.2 L552.2,347.0 L554.5,346.7 L556.8,346.8 L556.8,346.8 L434.8,89.8 L433.3,87.5 L431.7,86.9 L430.1,86.6 L428.5,86.4 L427.0,86.3 L425.4,86.4 L423.8,86.5 L422.2,86.7 L420.7,87.0 L419.1,87.3 L417.5,87.7 L415.9,88.2 L414.4,88.8 L412.8,89.6 L411.2,90.6 L409.6,93.4 Z" fill="#b08a48"/>
<path d="M409.6,93.4 L410.3,92.3 L410.9,91.2 L521.7,351.9 L520.8,352.2 L519.8,352.5 Z" fill="url(#gb4_0)"/>
<path d="M410.4,92.1 L411.4,90.5 L412.4,89.8 L523.9,351.4 L522.4,351.7 L520.9,352.1 Z" fill="url(#gb4_1)"/>
<path d="M411.9,90.2 L413.2,89.4 L414.4,88.8 L526.9,350.8 L525.0,351.1 L523.2,351.5 Z" fill="url(#gb4_2)"/>
<path d="M413.9,89.0 L415.4,88.4 L416.9,87.9 L530.6,350.1 L528.3,350.5 L526.1,350.9 Z" fill="url(#gb4_3)"/>
<path d="M416.4,88.0 L418.2,87.5 L420.0,87.1 L535.0,349.4 L532.4,349.8 L529.8,350.2 Z" fill="url(#gb4_4)"/>
<path d="M419.5,87.2 L421.6,86.8 L423.7,86.5 L540.5,348.5 L537.4,349.0 L534.3,349.5 Z" fill="url(#gb4_5)"/>
<path d="M423.2,86.6 L425.4,86.4 L427.5,86.4 L546.1,347.7 L542.9,348.2 L539.8,348.6 Z" fill="url(#gb4_6)"/>
<path d="M427.0,86.3 L429.0,86.4 L431.0,86.7 L551.3,347.1 L548.3,347.4 L545.3,347.8 Z" fill="url(#gb4_7)"/>
<path d="M430.5,86.6 L431.9,87.0 L433.3,87.6 L554.6,346.7 L552.6,346.9 L550.5,347.2 Z" fill="url(#gb4_8)"/>
<path d="M432.8,87.3 L433.8,88.3 L434.8,89.8 L556.8,346.8 L555.3,346.8 L553.9,346.8 Z" fill="url(#gb4_9)"/>
<path d="M518.5,349.3 L522.2,346.2 L525.8,344.9 L529.5,343.9 L533.2,343.1 L536.9,342.5 L540.6,342.0 L544.3,341.6 L547.9,341.5 L551.6,341.7 L555.3,343.6" fill="none" stroke="#4a3410" stroke-width="0.8" opacity="0.29"/>
<path d="M517.1,346.2 L520.8,343.1 L524.5,341.8 L528.1,340.8 L531.8,340.0 L535.5,339.3 L539.1,338.8 L542.8,338.5 L546.5,338.3 L550.1,338.5 L553.8,340.5" fill="none" stroke="#4a3410" stroke-width="0.8" opacity="0.28"/>
<path d="M515.8,343.1 L519.5,340.0 L523.1,338.7 L526.8,337.7 L530.4,336.9 L534.1,336.2 L537.7,335.7 L541.4,335.4 L545.0,335.2 L548.7,335.4 L552.3,337.4" fill="none" stroke="#4a3410" stroke-width="0.8" opacity="0.26"/>
<path d="M514.5,340.0 L518.2,336.9 L521.8,335.6 L525.4,334.6 L529.1,333.8 L532.7,333.2 L536.3,332.7 L540.0,332.3 L543.6,332.2 L547.2,332.4 L550.9,334.3" fill="none" stroke="#4a3410" stroke-width="0.8" opacity="0.25"/>
<path d="M513.2,337.0 L516.9,333.9 L520.5,332.6 L524.1,331.6 L527.7,330.8 L531.3,330.1 L535.0,329.6 L538.6,329.3 L542.2,329.1 L545.8,329.3 L549.4,331.3" fill="none" stroke="#4a3410" stroke-width="0.8" opacity="0.24"/>
<path d="M512.0,334.0 L515.6,330.9 L519.2,329.6 L522.8,328.6 L526.4,327.8 L530.0,327.1 L533.6,326.6 L537.2,326.3 L540.8,326.2 L544.4,326.3 L548.0,328.3" fill="none" stroke="#4a3410" stroke-width="0.8" opacity="0.23"/>
<path d="M510.7,331.0 L514.3,327.9 L517.9,326.6 L521.5,325.6 L525.1,324.8 L528.7,324.2 L532.3,323.7 L535.9,323.4 L539.4,323.2 L543.0,323.4 L546.6,325.3" fill="none" stroke="#4a3410" stroke-width="0.8" opacity="0.22"/>
<path d="M509.5,328.1 L513.0,325.0 L516.6,323.7 L520.2,322.7 L523.8,321.9 L527.4,321.3 L530.9,320.8 L534.5,320.4 L538.1,320.3 L541.7,320.5 L545.2,322.4" fill="none" stroke="#4a3410" stroke-width="0.8" opacity="0.21"/>
<path d="M508.2,325.3 L511.8,322.2 L515.4,320.8 L518.9,319.8 L522.5,319.0 L526.1,318.4 L529.6,317.9 L533.2,317.6 L536.8,317.4 L540.3,317.6 L543.9,319.6" fill="none" stroke="#4a3410" stroke-width="0.8" opacity="0.20"/>
<path d="M507.0,322.4 L510.6,319.3 L514.1,318.0 L517.7,317.0 L521.2,316.2 L524.8,315.6 L528.3,315.1 L531.9,314.7 L535.4,314.6 L539.0,314.8 L542.5,316.7" fill="none" stroke="#4a3410" stroke-width="0.8" opacity="0.18"/>
<path d="M505.8,319.6 L509.4,316.5 L512.9,315.2 L516.5,314.2 L520.0,313.4 L523.5,312.8 L527.1,312.3 L530.6,311.9 L534.1,311.8 L537.7,312.0 L541.2,313.9" fill="none" stroke="#4a3410" stroke-width="0.8" opacity="0.17"/>
<path d="M504.7,316.9 L508.2,313.8 L511.7,312.5 L515.2,311.5 L518.8,310.7 L522.3,310.0 L525.8,309.5 L529.3,309.2 L532.9,309.0 L536.4,309.2 L539.9,311.2" fill="none" stroke="#4a3410" stroke-width="0.8" opacity="0.16"/>
<path d="M503.5,314.1 L507.0,311.0 L510.5,309.7 L514.0,308.7 L517.6,307.9 L521.1,307.3 L524.6,306.8 L528.1,306.5 L531.6,306.3 L535.1,306.5 L538.6,308.4" fill="none" stroke="#4a3410" stroke-width="0.8" opacity="0.15"/>
<path d="M502.4,311.5 L505.9,308.4 L509.4,307.1 L512.9,306.1 L516.4,305.3 L519.9,304.6 L523.4,304.1 L526.8,303.8 L530.3,303.6 L533.8,303.8 L537.3,305.8" fill="none" stroke="#4a3410" stroke-width="0.8" opacity="0.14"/>
<path d="M501.3,308.8 L504.7,305.7 L508.2,304.4 L511.7,303.4 L515.2,302.6 L518.7,302.0 L522.1,301.5 L525.6,301.1 L529.1,301.0 L532.6,301.2 L536.1,303.1" fill="none" stroke="#4a3410" stroke-width="0.8" opacity="0.13"/>
<path d="M500.1,306.2 L503.6,303.1 L507.1,301.8 L510.6,300.8 L514.0,300.0 L517.5,299.4 L521.0,298.9 L524.4,298.5 L527.9,298.4 L531.4,298.6 L534.8,300.5" fill="none" stroke="#4a3410" stroke-width="0.8" opacity="0.12"/>
<path d="M499.1,303.6 L502.5,300.6 L506.0,299.2 L509.4,298.2 L512.9,297.4 L516.3,296.8 L519.8,296.3 L523.3,296.0 L526.7,295.8 L530.2,296.0 L533.6,297.9" fill="none" stroke="#4a3410" stroke-width="0.8" opacity="0.11"/>
<path d="M498.0,301.1 L501.4,298.0 L504.9,296.7 L508.3,295.7 L511.8,294.9 L515.2,294.3 L518.6,293.8 L522.1,293.4 L525.5,293.3 L529.0,293.5 L532.4,295.4" fill="none" stroke="#4a3410" stroke-width="0.8" opacity="0.10"/>
<path d="M496.9,298.6 L500.4,295.5 L503.8,294.2 L507.2,293.2 L510.6,292.4 L514.1,291.8 L517.5,291.3 L520.9,290.9 L524.4,290.8 L527.8,291.0 L531.2,292.9" fill="none" stroke="#4a3410" stroke-width="0.8" opacity="0.09"/>
<path d="M495.9,296.2 L499.3,293.1 L502.7,291.8 L506.1,290.8 L509.6,290.0 L513.0,289.3 L516.4,288.8 L519.8,288.5 L523.2,288.3 L526.7,288.5 L530.1,290.5" fill="none" stroke="#4a3410" stroke-width="0.8" opacity="0.08"/>
<path d="M494.8,293.8 L498.3,290.7 L501.7,289.4 L505.1,288.4 L508.5,287.6 L511.9,286.9 L515.3,286.4 L518.7,286.1 L522.1,285.9 L525.5,286.1 L528.9,288.1" fill="none" stroke="#4a3410" stroke-width="0.8" opacity="0.07"/>
<path d="M493.8,291.4 L497.2,288.3 L500.6,287.0 L504.0,286.0 L507.4,285.2 L510.8,284.5 L514.2,284.0 L517.6,283.7 L521.0,283.6 L524.4,283.7 L527.8,285.7" fill="none" stroke="#4a3410" stroke-width="0.8" opacity="0.06"/>
<path d="M492.8,289.1 L496.2,286.0 L499.6,284.6 L503.0,283.6 L506.4,282.8 L509.8,282.2 L513.2,281.7 L516.5,281.4 L519.9,281.2 L523.3,281.4 L526.7,283.4" fill="none" stroke="#4a3410" stroke-width="0.8" opacity="0.05"/>
<path d="M491.9,286.8 L495.2,283.7 L498.6,282.3 L502.0,281.4 L505.4,280.6 L508.7,279.9 L512.1,279.4 L515.5,279.1 L518.9,278.9 L522.2,279.1 L525.6,281.1" fill="none" stroke="#4a3410" stroke-width="0.8" opacity="0.04"/>
<path d="M490.9,284.5 L494.3,281.4 L497.6,280.1 L501.0,279.1 L504.4,278.3 L507.7,277.6 L511.1,277.2 L514.4,276.8 L517.8,276.7 L521.2,276.8 L524.5,278.8" fill="none" stroke="#4a3410" stroke-width="0.8" opacity="0.03"/>
<path d="M490.0,282.3 L493.3,279.2 L496.7,277.9 L500.0,276.9 L503.4,276.1 L506.7,275.4 L510.1,274.9 L513.4,274.6 L516.8,274.4 L520.1,274.6 L523.5,276.6" fill="none" stroke="#4a3410" stroke-width="0.8" opacity="0.03"/>
<path d="M489.0,280.1 L492.4,277.0 L495.7,275.7 L499.1,274.7 L502.4,273.9 L505.7,273.2 L509.1,272.7 L512.4,272.4 L515.8,272.3 L519.1,272.4 L522.4,274.4" fill="none" stroke="#4a3410" stroke-width="0.8" opacity="0.02"/>
<path d="M488.1,278.0 L491.5,274.9 L494.8,273.5 L498.1,272.5 L501.4,271.7 L504.8,271.1 L508.1,270.6 L511.4,270.3 L514.8,270.1 L518.1,270.3 L521.4,272.3" fill="none" stroke="#4a3410" stroke-width="0.8" opacity="0.01"/>
<path d="M487.2,275.8 L490.5,272.8 L493.9,271.4 L497.2,270.4 L500.5,269.6 L503.8,269.0 L507.1,268.5 L510.5,268.2 L513.8,268.0 L517.1,268.2 L520.4,270.1" fill="none" stroke="#4a3410" stroke-width="0.8" opacity="0.01"/>
<line x1="409.6" y1="93.4" x2="519.8" y2="352.5" stroke="#8c9428" stroke-width="1" opacity="0.35"/>
<line x1="434.8" y1="89.8" x2="556.8" y2="346.8" stroke="#5a5a1c" stroke-width="1.2" opacity="0.8"/>
<path d="M450.9,100.4 L453.9,88.9 L579.9,342.0 L575.6,352.1 Z" fill="url(#gwall)"/>
<path d="M453.9,88.9 L579.9,342.0 L582.1,341.2 L584.3,340.7 L586.5,340.2 L588.7,339.8 L590.9,339.4 L593.0,339.0 L595.2,338.6 L597.4,338.2 L599.6,337.8 L601.8,337.5 L604.0,337.1 L606.2,336.8 L608.4,336.5 L610.5,336.2 L612.7,336.0 L614.9,336.0 L614.9,336.0 L480.0,85.8 L478.3,83.3 L476.7,82.6 L475.1,82.3 L473.4,82.1 L471.8,82.0 L470.2,82.0 L468.6,82.0 L466.9,82.2 L465.3,82.4 L463.7,82.7 L462.0,83.1 L460.4,83.6 L458.8,84.2 L457.1,85.0 L455.5,86.0 L453.9,88.9 Z" fill="#b08a48"/>
<path d="M453.9,88.9 L454.5,87.8 L455.2,86.6 L581.7,341.4 L580.8,341.7 L579.9,342.0 Z" fill="url(#gb5_0)"/>
<path d="M454.7,87.5 L455.7,85.9 L456.7,85.2 L583.8,340.8 L582.4,341.1 L581.0,341.6 Z" fill="url(#gb5_1)"/>
<path d="M456.2,85.6 L457.5,84.8 L458.8,84.2 L586.6,340.2 L584.8,340.6 L583.1,341.0 Z" fill="url(#gb5_2)"/>
<path d="M458.3,84.4 L459.9,83.8 L461.4,83.3 L590.1,339.5 L588.0,339.9 L585.9,340.4 Z" fill="url(#gb5_3)"/>
<path d="M460.9,83.4 L462.7,83.0 L464.6,82.6 L594.3,338.8 L591.8,339.2 L589.4,339.7 Z" fill="url(#gb5_4)"/>
<path d="M464.1,82.7 L466.3,82.3 L468.5,82.0 L599.5,337.8 L596.5,338.4 L593.6,338.9 Z" fill="url(#gb5_5)"/>
<path d="M468.0,82.1 L470.2,82.0 L472.4,82.0 L604.8,337.0 L601.8,337.5 L598.8,338.0 Z" fill="url(#gb5_6)"/>
<path d="M471.9,82.0 L474.0,82.1 L476.1,82.5 L609.7,336.3 L606.9,336.7 L604.1,337.1 Z" fill="url(#gb5_7)"/>
<path d="M475.5,82.4 L477.0,82.7 L478.4,83.4 L612.8,336.0 L610.9,336.2 L609.0,336.4 Z" fill="url(#gb5_8)"/>
<path d="M477.9,83.1 L478.9,84.2 L480.0,85.8 L614.9,336.0 L613.5,336.0 L612.1,336.0 Z" fill="url(#gb5_9)"/>
<path d="M578.3,338.8 L581.8,335.7 L585.3,334.3 L588.8,333.3 L592.3,332.5 L595.8,331.8 L599.3,331.3 L602.7,330.9 L606.2,330.7 L609.7,330.9 L613.2,332.8" fill="none" stroke="#4a3410" stroke-width="0.8" opacity="0.29"/>
<path d="M576.8,335.7 L580.2,332.6 L583.7,331.2 L587.2,330.2 L590.7,329.3 L594.1,328.7 L597.6,328.1 L601.1,327.8 L604.6,327.6 L608.0,327.8 L611.5,329.7" fill="none" stroke="#4a3410" stroke-width="0.8" opacity="0.28"/>
<path d="M575.2,332.6 L578.7,329.4 L582.1,328.1 L585.6,327.1 L589.1,326.2 L592.5,325.6 L596.0,325.0 L599.4,324.7 L602.9,324.5 L606.4,324.6 L609.8,326.6" fill="none" stroke="#4a3410" stroke-width="0.8" opacity="0.26"/>
<path d="M573.7,329.5 L577.1,326.4 L580.6,325.0 L584.0,324.0 L587.5,323.2 L590.9,322.5 L594.4,322.0 L597.8,321.6 L601.3,321.4 L604.7,321.6 L608.2,323.5" fill="none" stroke="#4a3410" stroke-width="0.8" opacity="0.25"/>
<path d="M572.2,326.5 L575.6,323.4 L579.1,322.0 L582.5,321.0 L585.9,320.2 L589.4,319.5 L592.8,319.0 L596.2,318.6 L599.7,318.4 L603.1,318.6 L606.5,320.5" fill="none" stroke="#4a3410" stroke-width="0.8" opacity="0.24"/>
<path d="M570.7,323.5 L574.1,320.4 L577.5,319.0 L581.0,318.0 L584.4,317.2 L587.8,316.5 L591.2,316.0 L594.7,315.6 L598.1,315.4 L601.5,315.6 L604.9,317.5" fill="none" stroke="#4a3410" stroke-width="0.8" opacity="0.23"/>
<path d="M569.2,320.5 L572.6,317.4 L576.1,316.1 L579.5,315.0 L582.9,314.2 L586.3,313.5 L589.7,313.0 L593.1,312.6 L596.5,312.5 L599.9,312.6 L603.3,314.5" fill="none" stroke="#4a3410" stroke-width="0.8" opacity="0.22"/>
<path d="M567.8,317.6 L571.2,314.5 L574.6,313.2 L578.0,312.1 L581.4,311.3 L584.8,310.6 L588.2,310.1 L591.6,309.7 L595.0,309.6 L598.4,309.7 L601.8,311.6" fill="none" stroke="#4a3410" stroke-width="0.8" opacity="0.21"/>
<path d="M566.3,314.8 L569.7,311.6 L573.1,310.3 L576.5,309.3 L579.9,308.4 L583.3,307.8 L586.7,307.2 L590.1,306.9 L593.4,306.7 L596.8,306.8 L600.2,308.8" fill="none" stroke="#4a3410" stroke-width="0.8" opacity="0.20"/>
<path d="M564.9,311.9 L568.3,308.8 L571.7,307.4 L575.1,306.4 L578.4,305.6 L581.8,304.9 L585.2,304.4 L588.6,304.0 L591.9,303.8 L595.3,304.0 L598.7,305.9" fill="none" stroke="#4a3410" stroke-width="0.8" opacity="0.18"/>
<path d="M563.5,309.1 L566.9,306.0 L570.3,304.7 L573.6,303.6 L577.0,302.8 L580.4,302.1 L583.7,301.6 L587.1,301.2 L590.5,301.1 L593.8,301.2 L597.2,303.1" fill="none" stroke="#4a3410" stroke-width="0.8" opacity="0.17"/>
<path d="M562.2,306.4 L565.5,303.2 L568.9,301.9 L572.2,300.9 L575.6,300.0 L578.9,299.4 L582.3,298.8 L585.6,298.5 L589.0,298.3 L592.3,298.4 L595.7,300.4" fill="none" stroke="#4a3410" stroke-width="0.8" opacity="0.16"/>
<path d="M560.8,303.6 L564.2,300.5 L567.5,299.2 L570.8,298.1 L574.2,297.3 L577.5,296.6 L580.9,296.1 L584.2,295.7 L587.5,295.6 L590.9,295.7 L594.2,297.6" fill="none" stroke="#4a3410" stroke-width="0.8" opacity="0.15"/>
<path d="M559.5,301.0 L562.8,297.8 L566.1,296.5 L569.5,295.5 L572.8,294.6 L576.1,294.0 L579.5,293.4 L582.8,293.1 L586.1,292.9 L589.5,293.0 L592.8,295.0" fill="none" stroke="#4a3410" stroke-width="0.8" opacity="0.14"/>
<path d="M558.2,298.3 L561.5,295.2 L564.8,293.8 L568.1,292.8 L571.4,292.0 L574.8,291.3 L578.1,290.8 L581.4,290.4 L584.7,290.2 L588.0,290.4 L591.4,292.3" fill="none" stroke="#4a3410" stroke-width="0.8" opacity="0.13"/>
<path d="M556.9,295.7 L560.2,292.6 L563.5,291.2 L566.8,290.2 L570.1,289.4 L573.4,288.7 L576.7,288.2 L580.0,287.8 L583.3,287.6 L586.6,287.8 L590.0,289.7" fill="none" stroke="#4a3410" stroke-width="0.8" opacity="0.12"/>
<path d="M555.6,293.1 L558.9,290.0 L562.2,288.7 L565.5,287.7 L568.8,286.8 L572.1,286.1 L575.4,285.6 L578.7,285.3 L582.0,285.1 L585.3,285.2 L588.6,287.1" fill="none" stroke="#4a3410" stroke-width="0.8" opacity="0.11"/>
<path d="M554.3,290.6 L557.6,287.5 L560.9,286.1 L564.2,285.1 L567.5,284.3 L570.8,283.6 L574.1,283.1 L577.3,282.7 L580.6,282.5 L583.9,282.7 L587.2,284.6" fill="none" stroke="#4a3410" stroke-width="0.8" opacity="0.10"/>
<path d="M553.1,288.1 L556.4,285.0 L559.6,283.7 L562.9,282.6 L566.2,281.8 L569.5,281.1 L572.8,280.6 L576.0,280.2 L579.3,280.1 L582.6,280.2 L585.9,282.1" fill="none" stroke="#4a3410" stroke-width="0.8" opacity="0.09"/>
<path d="M551.9,285.7 L555.1,282.6 L558.4,281.2 L561.7,280.2 L564.9,279.4 L568.2,278.7 L571.5,278.2 L574.7,277.8 L578.0,277.6 L581.3,277.8 L584.5,279.7" fill="none" stroke="#4a3410" stroke-width="0.8" opacity="0.08"/>
<path d="M550.7,283.3 L553.9,280.1 L557.2,278.8 L560.4,277.8 L563.7,276.9 L567.0,276.3 L570.2,275.7 L573.5,275.4 L576.7,275.2 L580.0,275.3 L583.2,277.3" fill="none" stroke="#4a3410" stroke-width="0.8" opacity="0.07"/>
<path d="M549.5,280.9 L552.7,277.8 L556.0,276.4 L559.2,275.4 L562.5,274.6 L565.7,273.9 L569.0,273.4 L572.2,273.0 L575.5,272.8 L578.7,273.0 L582.0,274.9" fill="none" stroke="#4a3410" stroke-width="0.8" opacity="0.06"/>
<path d="M548.3,278.6 L551.6,275.4 L554.8,274.1 L558.0,273.1 L561.3,272.2 L564.5,271.6 L567.7,271.0 L571.0,270.7 L574.2,270.5 L577.5,270.6 L580.7,272.6" fill="none" stroke="#4a3410" stroke-width="0.8" opacity="0.05"/>
<path d="M547.2,276.3 L550.4,273.1 L553.6,271.8 L556.9,270.8 L560.1,269.9 L563.3,269.3 L566.5,268.7 L569.8,268.4 L573.0,268.2 L576.2,268.3 L579.5,270.3" fill="none" stroke="#4a3410" stroke-width="0.8" opacity="0.04"/>
<path d="M546.1,274.0 L549.3,270.9 L552.5,269.5 L555.7,268.5 L558.9,267.7 L562.1,267.0 L565.4,266.5 L568.6,266.1 L571.8,265.9 L575.0,266.1 L578.2,268.0" fill="none" stroke="#4a3410" stroke-width="0.8" opacity="0.03"/>
<path d="M544.9,271.8 L548.2,268.7 L551.4,267.3 L554.6,266.3 L557.8,265.5 L561.0,264.8 L564.2,264.3 L567.4,263.9 L570.6,263.7 L573.8,263.9 L577.0,265.8" fill="none" stroke="#4a3410" stroke-width="0.8" opacity="0.03"/>
<path d="M543.9,269.6 L547.1,266.5 L550.3,265.1 L553.5,264.1 L556.7,263.3 L559.9,262.6 L563.1,262.1 L566.3,261.7 L569.5,261.5 L572.7,261.7 L575.9,263.6" fill="none" stroke="#4a3410" stroke-width="0.8" opacity="0.02"/>
<path d="M542.8,267.5 L546.0,264.3 L549.2,263.0 L552.4,262.0 L555.6,261.1 L558.8,260.5 L561.9,259.9 L565.1,259.6 L568.3,259.4 L571.5,259.5 L574.7,261.5" fill="none" stroke="#4a3410" stroke-width="0.8" opacity="0.01"/>
<path d="M541.7,265.3 L544.9,262.2 L548.1,260.9 L551.3,259.8 L554.5,259.0 L557.7,258.3 L560.8,257.8 L564.0,257.4 L567.2,257.3 L570.4,257.4 L573.6,259.3" fill="none" stroke="#4a3410" stroke-width="0.8" opacity="0.01"/>
<line x1="453.9" y1="88.9" x2="579.9" y2="342.0" stroke="#8c9428" stroke-width="1" opacity="0.35"/>
<line x1="480.0" y1="85.8" x2="614.9" y2="336.0" stroke="#5a5a1c" stroke-width="1.2" opacity="0.8"/>
<path d="M496.5,96.0 L498.0,84.4 L636.7,331.5 L630.7,341.6 Z" fill="url(#gwall)"/>
<path d="M498.0,84.4 L636.7,331.5 L639.0,330.7 L641.2,330.1 L643.5,329.6 L645.8,329.1 L648.1,328.7 L650.4,328.2 L652.6,327.8 L654.9,327.3 L657.2,326.9 L659.5,326.5 L661.8,326.1 L664.0,325.8 L666.3,325.4 L668.6,325.1 L670.9,324.8 L673.2,324.8 L673.2,324.8 L525.6,83.5 L523.9,80.3 L522.2,79.2 L520.5,78.6 L518.7,78.1 L517.0,77.8 L515.3,77.7 L513.5,77.6 L511.8,77.6 L510.1,77.7 L508.4,77.9 L506.6,78.2 L504.9,78.6 L503.2,79.1 L501.4,79.9 L499.7,81.0 L498.0,84.4 Z" fill="#b08a48"/>
<path d="M498.0,84.4 L498.7,83.1 L499.4,81.7 L638.5,330.8 L637.6,331.2 L636.7,331.5 Z" fill="url(#gb6_0)"/>
<path d="M498.8,82.8 L499.9,80.9 L501.0,80.2 L640.7,330.2 L639.2,330.6 L637.8,331.1 Z" fill="url(#gb6_1)"/>
<path d="M500.5,80.5 L501.9,79.7 L503.2,79.1 L643.6,329.6 L641.8,330.0 L640.0,330.4 Z" fill="url(#gb6_2)"/>
<path d="M502.7,79.4 L504.3,78.8 L506.0,78.3 L647.3,328.8 L645.1,329.3 L642.9,329.7 Z" fill="url(#gb6_3)"/>
<path d="M505.4,78.5 L507.4,78.1 L509.3,77.8 L651.6,328.0 L649.1,328.5 L646.5,329.0 Z" fill="url(#gb6_4)"/>
<path d="M508.8,77.8 L511.1,77.6 L513.5,77.6 L657.1,327.0 L654.0,327.5 L650.9,328.1 Z" fill="url(#gb6_5)"/>
<path d="M512.9,77.6 L515.3,77.7 L517.6,78.0 L662.6,326.0 L659.5,326.5 L656.4,327.1 Z" fill="url(#gb6_6)"/>
<path d="M517.1,77.9 L519.3,78.3 L521.5,79.0 L667.7,325.2 L664.8,325.7 L661.9,326.1 Z" fill="url(#gb6_7)"/>
<path d="M520.9,78.8 L522.5,79.4 L524.0,80.4 L671.0,324.8 L669.0,325.0 L667.0,325.3 Z" fill="url(#gb6_8)"/>
<path d="M523.4,80.0 L524.5,81.4 L525.6,83.5 L673.2,324.8 L671.7,324.8 L670.2,324.9 Z" fill="url(#gb6_9)"/>
<path d="M634.9,328.3 L638.5,325.1 L642.2,323.7 L645.8,322.6 L649.4,321.7 L653.1,321.0 L656.7,320.4 L660.3,319.9 L664.0,319.7 L667.6,319.8 L671.2,321.6" fill="none" stroke="#4a3410" stroke-width="0.8" opacity="0.29"/>
<path d="M633.1,325.2 L636.7,322.0 L640.4,320.6 L644.0,319.5 L647.6,318.6 L651.2,317.8 L654.8,317.2 L658.4,316.8 L662.1,316.5 L665.7,316.6 L669.3,318.5" fill="none" stroke="#4a3410" stroke-width="0.8" opacity="0.28"/>
<path d="M631.4,322.1 L635.0,318.9 L638.6,317.5 L642.2,316.4 L645.8,315.5 L649.4,314.7 L653.0,314.1 L656.6,313.7 L660.2,313.4 L663.8,313.5 L667.4,315.4" fill="none" stroke="#4a3410" stroke-width="0.8" opacity="0.26"/>
<path d="M629.7,319.0 L633.3,315.8 L636.8,314.4 L640.4,313.3 L644.0,312.4 L647.6,311.7 L651.2,311.1 L654.8,310.6 L658.4,310.4 L661.9,310.5 L665.5,312.3" fill="none" stroke="#4a3410" stroke-width="0.8" opacity="0.25"/>
<path d="M628.0,316.0 L631.5,312.8 L635.1,311.4 L638.7,310.3 L642.3,309.4 L645.8,308.6 L649.4,308.0 L653.0,307.6 L656.5,307.3 L660.1,307.4 L663.7,309.3" fill="none" stroke="#4a3410" stroke-width="0.8" opacity="0.24"/>
<path d="M626.3,313.0 L629.8,309.8 L633.4,308.4 L637.0,307.3 L640.5,306.4 L644.1,305.6 L647.6,305.0 L651.2,304.6 L654.7,304.4 L658.3,304.4 L661.8,306.3" fill="none" stroke="#4a3410" stroke-width="0.8" opacity="0.23"/>
<path d="M624.6,310.0 L628.2,306.8 L631.7,305.4 L635.3,304.3 L638.8,303.4 L642.3,302.7 L645.9,302.1 L649.4,301.7 L653.0,301.4 L656.5,301.5 L660.0,303.3" fill="none" stroke="#4a3410" stroke-width="0.8" opacity="0.22"/>
<path d="M623.0,307.1 L626.5,303.9 L630.1,302.5 L633.6,301.4 L637.1,300.5 L640.6,299.8 L644.2,299.2 L647.7,298.7 L651.2,298.5 L654.7,298.6 L658.3,300.4" fill="none" stroke="#4a3410" stroke-width="0.8" opacity="0.21"/>
<path d="M621.4,304.3 L624.9,301.1 L628.4,299.6 L631.9,298.5 L635.4,297.6 L638.9,296.9 L642.5,296.3 L646.0,295.9 L649.5,295.6 L653.0,295.7 L656.5,297.6" fill="none" stroke="#4a3410" stroke-width="0.8" opacity="0.20"/>
<path d="M619.8,301.4 L623.3,298.2 L626.8,296.8 L630.3,295.7 L633.8,294.8 L637.3,294.1 L640.8,293.5 L644.3,293.0 L647.8,292.8 L651.3,292.9 L654.8,294.7" fill="none" stroke="#4a3410" stroke-width="0.8" opacity="0.18"/>
<path d="M618.2,298.6 L621.7,295.4 L625.2,294.0 L628.7,292.9 L632.2,292.0 L635.6,291.3 L639.1,290.7 L642.6,290.2 L646.1,290.0 L649.6,290.1 L653.1,291.9" fill="none" stroke="#4a3410" stroke-width="0.8" opacity="0.17"/>
<path d="M616.7,295.9 L620.1,292.7 L623.6,291.3 L627.1,290.2 L630.6,289.3 L634.0,288.5 L637.5,287.9 L641.0,287.5 L644.4,287.2 L647.9,287.3 L651.4,289.2" fill="none" stroke="#4a3410" stroke-width="0.8" opacity="0.16"/>
<path d="M615.2,293.1 L618.6,289.9 L622.1,288.5 L625.5,287.4 L629.0,286.5 L632.4,285.8 L635.9,285.2 L639.3,284.8 L642.8,284.5 L646.3,284.6 L649.7,286.4" fill="none" stroke="#4a3410" stroke-width="0.8" opacity="0.15"/>
<path d="M613.6,290.5 L617.1,287.3 L620.5,285.9 L624.0,284.8 L627.4,283.9 L630.9,283.1 L634.3,282.5 L637.7,282.1 L641.2,281.8 L644.6,281.9 L648.1,283.8" fill="none" stroke="#4a3410" stroke-width="0.8" opacity="0.14"/>
<path d="M612.2,287.8 L615.6,284.6 L619.0,283.2 L622.5,282.1 L625.9,281.2 L629.3,280.5 L632.7,279.9 L636.2,279.4 L639.6,279.2 L643.0,279.3 L646.5,281.1" fill="none" stroke="#4a3410" stroke-width="0.8" opacity="0.13"/>
<path d="M610.7,285.2 L614.1,282.0 L617.5,280.6 L621.0,279.5 L624.4,278.6 L627.8,277.9 L631.2,277.3 L634.6,276.8 L638.0,276.6 L641.4,276.7 L644.9,278.5" fill="none" stroke="#4a3410" stroke-width="0.8" opacity="0.12"/>
<path d="M609.3,282.6 L612.7,279.5 L616.1,278.0 L619.5,276.9 L622.9,276.0 L626.3,275.3 L629.7,274.7 L633.1,274.3 L636.5,274.0 L639.9,274.1 L643.3,275.9" fill="none" stroke="#4a3410" stroke-width="0.8" opacity="0.11"/>
<path d="M607.8,280.1 L611.2,276.9 L614.6,275.5 L618.0,274.4 L621.4,273.5 L624.8,272.8 L628.2,272.2 L631.6,271.7 L635.0,271.5 L638.4,271.6 L641.8,273.4" fill="none" stroke="#4a3410" stroke-width="0.8" opacity="0.10"/>
<path d="M606.4,277.6 L609.8,274.4 L613.2,273.0 L616.6,271.9 L620.0,271.0 L623.3,270.3 L626.7,269.7 L630.1,269.2 L633.5,269.0 L636.9,269.1 L640.2,270.9" fill="none" stroke="#4a3410" stroke-width="0.8" opacity="0.09"/>
<path d="M605.1,275.2 L608.4,272.0 L611.8,270.6 L615.2,269.5 L618.5,268.6 L621.9,267.8 L625.3,267.2 L628.6,266.8 L632.0,266.5 L635.4,266.6 L638.7,268.5" fill="none" stroke="#4a3410" stroke-width="0.8" opacity="0.08"/>
<path d="M603.7,272.8 L607.1,269.6 L610.4,268.2 L613.8,267.1 L617.1,266.2 L620.5,265.4 L623.8,264.8 L627.2,264.4 L630.5,264.1 L633.9,264.2 L637.3,266.1" fill="none" stroke="#4a3410" stroke-width="0.8" opacity="0.07"/>
<path d="M602.4,270.4 L605.7,267.2 L609.1,265.8 L612.4,264.7 L615.7,263.8 L619.1,263.0 L622.4,262.4 L625.8,262.0 L629.1,261.8 L632.5,261.8 L635.8,263.7" fill="none" stroke="#4a3410" stroke-width="0.8" opacity="0.06"/>
<path d="M601.1,268.1 L604.4,264.9 L607.7,263.4 L611.1,262.3 L614.4,261.4 L617.7,260.7 L621.1,260.1 L624.4,259.7 L627.7,259.4 L631.0,259.5 L634.4,261.4" fill="none" stroke="#4a3410" stroke-width="0.8" opacity="0.05"/>
<path d="M599.8,265.8 L603.1,262.6 L606.4,261.1 L609.7,260.1 L613.1,259.2 L616.4,258.4 L619.7,257.8 L623.0,257.4 L626.3,257.1 L629.7,257.2 L633.0,259.1" fill="none" stroke="#4a3410" stroke-width="0.8" opacity="0.04"/>
<path d="M598.5,263.5 L601.8,260.3 L605.1,258.9 L608.4,257.8 L611.7,256.9 L615.1,256.1 L618.4,255.6 L621.7,255.1 L625.0,254.9 L628.3,254.9 L631.6,256.8" fill="none" stroke="#4a3410" stroke-width="0.8" opacity="0.03"/>
<path d="M597.3,261.3 L600.6,258.1 L603.9,256.7 L607.2,255.6 L610.5,254.7 L613.7,253.9 L617.0,253.3 L620.3,252.9 L623.6,252.6 L626.9,252.7 L630.2,254.6" fill="none" stroke="#4a3410" stroke-width="0.8" opacity="0.03"/>
<path d="M596.0,259.1 L599.3,255.9 L602.6,254.5 L605.9,253.4 L609.2,252.5 L612.5,251.7 L615.8,251.1 L619.0,250.7 L622.3,250.5 L625.6,250.5 L628.9,252.4" fill="none" stroke="#4a3410" stroke-width="0.8" opacity="0.02"/>
<path d="M594.8,257.0 L598.1,253.8 L601.4,252.3 L604.7,251.2 L607.9,250.3 L611.2,249.6 L614.5,249.0 L617.8,248.6 L621.0,248.3 L624.3,248.4 L627.6,250.3" fill="none" stroke="#4a3410" stroke-width="0.8" opacity="0.01"/>
<path d="M593.7,254.8 L596.9,251.7 L600.2,250.2 L603.4,249.1 L606.7,248.2 L610.0,247.5 L613.2,246.9 L616.5,246.5 L619.8,246.2 L623.0,246.3 L626.3,248.1" fill="none" stroke="#4a3410" stroke-width="0.8" opacity="0.01"/>
<line x1="498.0" y1="84.4" x2="636.7" y2="331.5" stroke="#8c9428" stroke-width="1" opacity="0.35"/>
<line x1="525.6" y1="83.5" x2="673.2" y2="324.8" stroke="#5a5a1c" stroke-width="1.2" opacity="0.8"/>
<path d="M521.0,352.5 L540.0,347.5 L535.8,368.4 L517.0,372.0 Z" fill="url(#gleg)"/>
<path d="M580.0,342.0 L600.0,336.4 L594.0,358.0 L573.0,362.0 Z" fill="url(#gleg)"/>
<path d="M637.5,331.5 L657.0,325.6 L651.0,344.5 L629.2,352.6 Z" fill="url(#gleg)"/>
<path d="M540.0,347.5 L557.4,346.3 L554.7,351.3 L539.0,357.6 Z" fill="url(#glens)"/>
<path d="M600.0,336.4 L614.7,335.5 L612.5,340.5 L598.5,344.5 Z" fill="url(#glens)"/>
<path d="M657.0,325.6 L672.5,324.5 L668.0,331.0 L655.5,335.5 Z" fill="url(#glens)"/>
<path d="M556.0,352.2 L571.5,349.6 L571.0,355.0 L557.0,359.0 Z" fill="url(#glens)"/>
<path d="M614.0,341.5 L631.0,338.2 L630.2,345.0 L615.7,348.0 Z" fill="url(#glens)"/>
<path d="M670.6,330.5 L686.0,327.8 L684.5,334.6 L671.5,337.3 Z" fill="url(#glens)"/>
<rect x="309.4" y="384.5" width="8.2" height="33.5" rx="4" fill="url(#gcb)"/>
<path d="M536.6,95.5 L538.6,74 Q540.8,71.6 543.2,74 L541.4,95.5 Z" fill="url(#gcbs)"/>
<line x1="259.6" y1="98" x2="260.6" y2="125" stroke="#f0f0f0" stroke-width="1.2"/>
<text x="258.5" y="96" font-family="Liberation Sans" font-size="12.2" fill="#f4f4f4" stroke="#000" stroke-width="0.3">874 µm</text>
<text transform="translate(321.5,425) rotate(-10.5)" font-family="Liberation Sans" font-size="15" fill="#f4f4f4" stroke="#000" stroke-width="0.4">25.0</text>
<text transform="translate(399,412.5) rotate(-10.5)" font-family="Liberation Sans" font-size="15" fill="#f4f4f4" stroke="#000" stroke-width="0.4">20.0</text>
<text transform="translate(472.8,398) rotate(-10.5)" font-family="Liberation Sans" font-size="15" fill="#f4f4f4" stroke="#000" stroke-width="0.4">15.0</text>
<text transform="translate(543,385) rotate(-10.5)" font-family="Liberation Sans" font-size="15" fill="#f4f4f4" stroke="#000" stroke-width="0.4">10.0</text>
<text transform="translate(613,373.5) rotate(-10.5)" font-family="Liberation Sans" font-size="15" fill="#f4f4f4" stroke="#000" stroke-width="0.4">5.0</text>
<text transform="translate(474,414) rotate(-12)" font-family="Liberation Sans" font-size="19" fill="#f4f4f4" stroke="#000" stroke-width="0.45">Y: 26.0 mm</text>
<text transform="translate(677.5,359) rotate(-28) skewX(-35)" font-family="Liberation Sans" font-size="12.5" fill="#f4f4f4">0.0</text>
<text transform="translate(684,343) rotate(-18) scale(1,0.75)" font-family="Liberation Sans" font-size="11" stroke="#000" stroke-width="0.4" fill="#f0f0f0">0.0</text>
<text transform="translate(639,251) rotate(-118) scale(0.95,-0.5)" font-family="Liberation Sans" font-size="17" fill="#e8e8e8" stroke="#000" stroke-width="0.6">X: 30.0 mm</text>
<text transform="translate(549,107) rotate(-118) scale(0.95,-0.55)" font-family="Liberation Sans" font-size="11" fill="#e0e0e0" stroke="#000" stroke-width="0.5">0.0</text>
<text transform="translate(568,139) rotate(-118) scale(0.95,-0.55)" font-family="Liberation Sans" font-size="11" fill="#e0e0e0" stroke="#000" stroke-width="0.5">0.0</text>
<text transform="translate(588,173) rotate(-118) scale(0.95,-0.55)" font-family="Liberation Sans" font-size="11" fill="#e0e0e0" stroke="#000" stroke-width="0.5">0.0</text>
<text transform="translate(609,208) rotate(-118) scale(0.95,-0.55)" font-family="Liberation Sans" font-size="11" fill="#e0e0e0" stroke="#000" stroke-width="0.5">0.0</text>
<text transform="translate(663,297) rotate(-118) scale(0.95,-0.55)" font-family="Liberation Sans" font-size="11" fill="#e0e0e0" stroke="#000" stroke-width="0.5">5.0</text>
<text x="754.3" y="57.8" font-family="Liberation Sans" font-size="17.6" fill="#f4f4f4" stroke="#000" stroke-width="0.35">874.400 µm</text>
<rect x="832" y="69.6" width="10" height="359.4" rx="1.5" fill="url(#gcbig)"/>
<line x1="830.2" y1="70.4" x2="830.2" y2="428.5" stroke="#c8c8c8" stroke-width="1.2"/>
<line x1="824.2" y1="427.9" x2="830.2" y2="427.9" stroke="#c8c8c8" stroke-width="1.1"/>
<text x="823.2" y="432.5" text-anchor="end" font-family="Liberation Sans" font-size="17" fill="#f4f4f4" stroke="#000" stroke-width="0.35">0.0</text>
<line x1="826.7" y1="411.6" x2="830.2" y2="411.6" stroke="#c8c8c8" stroke-width="1.1"/>
<line x1="826.7" y1="395.3" x2="830.2" y2="395.3" stroke="#c8c8c8" stroke-width="1.1"/>
<line x1="826.7" y1="379.0" x2="830.2" y2="379.0" stroke="#c8c8c8" stroke-width="1.1"/>
<line x1="826.7" y1="362.6" x2="830.2" y2="362.6" stroke="#c8c8c8" stroke-width="1.1"/>
<line x1="824.2" y1="346.3" x2="830.2" y2="346.3" stroke="#c8c8c8" stroke-width="1.1"/>
<text x="823.2" y="350.9" text-anchor="end" font-family="Liberation Sans" font-size="17" fill="#f4f4f4" stroke="#000" stroke-width="0.35">200.0</text>
<line x1="826.7" y1="330.0" x2="830.2" y2="330.0" stroke="#c8c8c8" stroke-width="1.1"/>
<line x1="826.7" y1="313.7" x2="830.2" y2="313.7" stroke="#c8c8c8" stroke-width="1.1"/>
<line x1="826.7" y1="297.4" x2="830.2" y2="297.4" stroke="#c8c8c8" stroke-width="1.1"/>
<line x1="826.7" y1="281.1" x2="830.2" y2="281.1" stroke="#c8c8c8" stroke-width="1.1"/>
<line x1="824.2" y1="264.8" x2="830.2" y2="264.8" stroke="#c8c8c8" stroke-width="1.1"/>
<text x="823.2" y="269.4" text-anchor="end" font-family="Liberation Sans" font-size="17" fill="#f4f4f4" stroke="#000" stroke-width="0.35">400.0</text>
<line x1="826.7" y1="248.4" x2="830.2" y2="248.4" stroke="#c8c8c8" stroke-width="1.1"/>
<line x1="826.7" y1="232.1" x2="830.2" y2="232.1" stroke="#c8c8c8" stroke-width="1.1"/>
<line x1="826.7" y1="215.8" x2="830.2" y2="215.8" stroke="#c8c8c8" stroke-width="1.1"/>
<line x1="826.7" y1="199.5" x2="830.2" y2="199.5" stroke="#c8c8c8" stroke-width="1.1"/>
<line x1="824.2" y1="183.2" x2="830.2" y2="183.2" stroke="#c8c8c8" stroke-width="1.1"/>
<text x="823.2" y="187.8" text-anchor="end" font-family="Liberation Sans" font-size="17" fill="#f4f4f4" stroke="#000" stroke-width="0.35">600.0</text>
<line x1="826.7" y1="166.9" x2="830.2" y2="166.9" stroke="#c8c8c8" stroke-width="1.1"/>
<line x1="826.7" y1="150.5" x2="830.2" y2="150.5" stroke="#c8c8c8" stroke-width="1.1"/>
<line x1="826.7" y1="134.2" x2="830.2" y2="134.2" stroke="#c8c8c8" stroke-width="1.1"/>
<line x1="826.7" y1="117.9" x2="830.2" y2="117.9" stroke="#c8c8c8" stroke-width="1.1"/>
<line x1="824.2" y1="101.6" x2="830.2" y2="101.6" stroke="#c8c8c8" stroke-width="1.1"/>
<text x="823.2" y="106.2" text-anchor="end" font-family="Liberation Sans" font-size="17" fill="#f4f4f4" stroke="#000" stroke-width="0.35">800.0</text>
<line x1="826.7" y1="85.3" x2="830.2" y2="85.3" stroke="#c8c8c8" stroke-width="1.1"/>
<text x="693" y="531" font-family="Liberation Sans" font-size="13" fill="#e6e6e6">Level[---, ---]</text><text x="770.3" y="531" font-family="Liberation Sans" font-size="13" fill="#e6e6e6">H[---, ---]</text><text x="825.2" y="531" font-family="Liberation Sans" font-size="13" fill="#e6e6e6">mm</text>
<text x="853" y="549" font-family="Liberation Sans" font-size="13" fill="#e6e6e6">mm</text>
<line x1="202.3" y1="534.5" x2="202.3" y2="866" stroke="#6e6e6e" stroke-width="1"/>
<line x1="353.6" y1="534.5" x2="353.6" y2="866" stroke="#6e6e6e" stroke-width="1"/>
<line x1="504.9" y1="534.5" x2="504.9" y2="866" stroke="#6e6e6e" stroke-width="1"/>
<line x1="656.2" y1="534.5" x2="656.2" y2="866" stroke="#6e6e6e" stroke-width="1"/>
<line x1="807.5" y1="534.5" x2="807.5" y2="866" stroke="#6e6e6e" stroke-width="1"/>
<line x1="51.5" y1="816.4" x2="849.5" y2="816.4" stroke="#6e6e6e" stroke-width="1"/>
<line x1="51.5" y1="736.4" x2="849.5" y2="736.4" stroke="#6e6e6e" stroke-width="1"/>
<line x1="51.5" y1="656.4" x2="849.5" y2="656.4" stroke="#6e6e6e" stroke-width="1"/>
<line x1="51.5" y1="576.4" x2="849.5" y2="576.4" stroke="#6e6e6e" stroke-width="1"/>
<rect x="51.5" y="534.5" width="798" height="331.5" fill="none" stroke="#dcdcdc" stroke-width="1"/>
<text transform="translate(47.3,820.0) scale(1,1.21)" text-anchor="end" font-family="Liberation Mono" font-size="11.25" fill="#acacac">0.0000</text>
<text transform="translate(47.3,740.0) scale(1,1.21)" text-anchor="end" font-family="Liberation Mono" font-size="11.25" fill="#acacac">0.2000</text>
<text transform="translate(47.3,660.0) scale(1,1.21)" text-anchor="end" font-family="Liberation Mono" font-size="11.25" fill="#acacac">0.4000</text>
<text transform="translate(47.3,580.0) scale(1,1.21)" text-anchor="end" font-family="Liberation Mono" font-size="11.25" fill="#acacac">0.6000</text>
<text transform="translate(202.3,883.8) scale(1,1.21)" text-anchor="middle" font-family="Liberation Mono" font-size="11.25" fill="#acacac">2.5000</text>
<text transform="translate(353.6,883.8) scale(1,1.21)" text-anchor="middle" font-family="Liberation Mono" font-size="11.25" fill="#acacac">5.0000</text>
<text transform="translate(504.9,883.8) scale(1,1.21)" text-anchor="middle" font-family="Liberation Mono" font-size="11.25" fill="#acacac">7.5000</text>
<text transform="translate(656.2,883.8) scale(1,1.21)" text-anchor="middle" font-family="Liberation Mono" font-size="11.25" fill="#acacac">10.0000</text>
<text transform="translate(807.5,883.8) scale(1,1.21)" text-anchor="middle" font-family="Liberation Mono" font-size="11.25" fill="#acacac">12.5000</text>
<text transform="translate(53.3,883.8) scale(1,1.21)" font-family="Liberation Mono" font-size="11.25" fill="#acacac">0.0000</text>
<path d="M51.7,817.0 L56.0,816.5 L60.7,814.4 L65.2,818.0 L70.0,817.2 L74.2,816.6 L79.8,818.0 L82.0,817.0 L83.0,812.0 L84.0,780.0 L86.0,700.0 L87.0,662.0 L89.0,657.0 L92.3,652.9 L94.9,648.9 L97.6,645.1 L100.2,641.5 L102.9,638.0 L105.5,634.6 L108.2,631.4 L110.8,628.3 L113.4,625.4 L116.1,622.6 L118.7,619.9 L121.4,617.4 L124.0,615.0 L126.7,612.8 L129.3,610.7 L131.9,608.7 L134.6,606.9 L137.2,605.2 L139.9,603.6 L142.5,602.2 L145.1,600.9 L147.8,599.7 L150.4,598.7 L153.1,597.9 L155.7,597.1 L158.4,596.5 L161.0,596.0 L163.6,595.7 L166.3,595.5 L168.9,595.4 L171.6,595.5 L174.2,595.7 L176.9,596.0 L179.5,596.5 L182.1,597.1 L184.8,597.8 L187.4,598.7 L190.1,599.7 L192.7,600.8 L195.4,602.1 L198.0,603.5 L200.6,605.1 L203.3,606.8 L205.9,608.6 L208.6,610.5 L211.2,612.6 L213.9,614.9 L216.5,617.2 L219.1,619.8 L221.8,622.4 L224.4,625.2 L227.1,628.1 L229.7,631.2 L232.4,634.4 L235.0,637.8 L237.6,641.3 L240.3,644.9 L242.9,648.7 L243.8,652.5 L244.8,700.0 L245.8,790.0 L247.0,813.0 L249.5,817.8 L260.0,818.6 L270.0,818.0 L285.0,818.8 L300.0,818.2 L315.0,818.9 L330.0,818.2 L343.0,818.6 L345.8,816.5 L346.9,808.0 L348.0,740.0 L349.3,658.0 L352.8,654.2 L355.4,650.4 L357.9,646.8 L360.5,643.2 L363.1,639.9 L365.6,636.6 L368.2,633.5 L370.8,630.5 L373.4,627.6 L375.9,624.9 L378.5,622.3 L381.1,619.8 L383.7,617.4 L386.2,615.2 L388.8,613.1 L391.4,611.1 L394.0,609.3 L396.5,607.5 L399.1,605.9 L401.7,604.5 L404.2,603.1 L406.8,601.9 L409.4,600.8 L412.0,599.8 L414.5,598.9 L417.1,598.2 L419.7,597.6 L422.3,597.1 L424.8,596.8 L427.4,596.5 L430.0,596.4 L432.6,596.4 L435.1,596.6 L437.7,596.8 L440.3,597.2 L442.8,597.7 L445.4,598.3 L448.0,599.1 L450.6,599.9 L453.1,600.9 L455.7,602.1 L458.3,603.3 L460.9,604.7 L463.4,606.2 L466.0,607.8 L468.6,609.5 L471.1,611.4 L473.7,613.4 L476.3,615.5 L478.9,617.8 L481.4,620.2 L484.0,622.7 L486.6,625.3 L489.2,628.0 L491.7,630.9 L494.3,634.0 L496.9,637.1 L499.5,640.4 L502.0,643.8 L504.6,648.0 L505.8,700.0 L507.3,790.0 L508.6,813.0 L511.0,817.6 L525.0,818.4 L540.0,817.8 L560.0,818.6 L580.0,818.0 L595.0,818.6 L603.0,817.5 L604.5,812.0 L606.0,780.0 L607.5,700.0 L608.2,655.0 L611.0,651.0 L613.6,649.5 L615.3,648.6 L618.0,644.4 L620.7,640.4 L623.3,636.6 L626.0,632.9 L628.7,629.4 L631.4,626.0 L634.0,622.8 L636.7,619.7 L639.4,616.8 L642.0,614.0 L644.7,611.4 L647.4,608.9 L650.1,606.6 L652.7,604.4 L655.4,602.4 L658.1,600.5 L660.8,598.8 L663.4,597.2 L666.1,595.7 L668.8,594.4 L671.5,593.3 L674.1,592.3 L676.8,591.4 L679.5,590.7 L682.1,590.1 L684.8,589.7 L687.5,589.4 L690.2,589.3 L692.8,589.3 L695.5,589.5 L698.2,589.8 L700.9,590.2 L703.5,590.8 L706.2,591.5 L708.9,592.4 L711.5,593.4 L714.2,594.6 L716.9,595.9 L719.6,597.4 L722.2,599.0 L724.9,600.8 L727.6,602.7 L730.3,604.7 L732.9,606.9 L735.6,609.3 L738.3,611.8 L740.9,614.4 L743.6,617.2 L746.3,620.1 L749.0,623.2 L751.6,626.5 L754.3,629.9 L757.0,633.4 L759.7,637.2 L762.3,641.0 L765.0,645.0 L767.5,649.0 L768.0,700.0 L768.5,790.0 L769.5,806.0 L772.0,810.3 L785.0,810.8 L800.0,810.2 L815.0,810.8 L830.0,810.0 L848.5,810.3" fill="none" stroke="#10c0cc" stroke-width="1.2" stroke-linejoin="round"/>
<path d="M87.0,661.2 L89.7,657.0 L92.3,652.9 L94.9,648.9 L97.6,645.1 L100.2,641.5 L102.9,638.0 L105.5,634.6 L108.2,631.4 L110.8,628.3 L113.4,625.4 L116.1,622.6 L118.7,619.9 L121.4,617.4 L124.0,615.0 L126.7,612.8 L129.3,610.7 L131.9,608.7 L134.6,606.9 L137.2,605.2 L139.9,603.6 L142.5,602.2 L145.1,600.9 L147.8,599.7 L150.4,598.7 L153.1,597.9 L155.7,597.1 L158.4,596.5 L161.0,596.0 L163.6,595.7 L166.3,595.5 L168.9,595.4 L171.6,595.5 L174.2,595.7 L176.9,596.0 L179.5,596.5 L182.1,597.1 L184.8,597.8 L187.4,598.7 L190.1,599.7 L192.7,600.8 L195.4,602.1 L198.0,603.5 L200.6,605.1 L203.3,606.8 L205.9,608.6 L208.6,610.5 L211.2,612.6 L213.9,614.9 L216.5,617.2 L219.1,619.8 L221.8,622.4 L224.4,625.2 L227.1,628.1 L229.7,631.2 L232.4,634.4 L235.0,637.8 L237.6,641.3 L240.3,644.9 L242.9,648.7 L245.6,652.6" fill="none" stroke="#12f012" stroke-width="2.8" stroke-linecap="round"/>
<path d="M350.2,658.1 L352.8,654.2 L355.4,650.4 L357.9,646.8 L360.5,643.2 L363.1,639.9 L365.6,636.6 L368.2,633.5 L370.8,630.5 L373.4,627.6 L375.9,624.9 L378.5,622.3 L381.1,619.8 L383.7,617.4 L386.2,615.2 L388.8,613.1 L391.4,611.1 L394.0,609.3 L396.5,607.5 L399.1,605.9 L401.7,604.5 L404.2,603.1 L406.8,601.9 L409.4,600.8 L412.0,599.8 L414.5,598.9 L417.1,598.2 L419.7,597.6 L422.3,597.1 L424.8,596.8 L427.4,596.5 L430.0,596.4 L432.6,596.4 L435.1,596.6 L437.7,596.8 L440.3,597.2 L442.8,597.7 L445.4,598.3 L448.0,599.1 L450.6,599.9 L453.1,600.9 L455.7,602.1 L458.3,603.3 L460.9,604.7 L463.4,606.2 L466.0,607.8 L468.6,609.5 L471.1,611.4 L473.7,613.4 L476.3,615.5 L478.9,617.8 L481.4,620.2 L484.0,622.7 L486.6,625.3 L489.2,628.0 L491.7,630.9 L494.3,634.0 L496.9,637.1 L499.5,640.4 L502.0,643.8 L504.6,647.3" fill="none" stroke="#12f012" stroke-width="2.8" stroke-linecap="round"/>
<path d="M607.3,662.0 L610.0,657.4 L612.6,652.9 L615.3,648.6 L618.0,644.4 L620.7,640.4 L623.3,636.6 L626.0,632.9 L628.7,629.4 L631.4,626.0 L634.0,622.8 L636.7,619.7 L639.4,616.8 L642.0,614.0 L644.7,611.4 L647.4,608.9 L650.1,606.6 L652.7,604.4 L655.4,602.4 L658.1,600.5 L660.8,598.8 L663.4,597.2 L666.1,595.7 L668.8,594.4 L671.5,593.3 L674.1,592.3 L676.8,591.4 L679.5,590.7 L682.1,590.1 L684.8,589.7 L687.5,589.4 L690.2,589.3 L692.8,589.3 L695.5,589.5 L698.2,589.8 L700.9,590.2 L703.5,590.8 L706.2,591.5 L708.9,592.4 L711.5,593.4 L714.2,594.6 L716.9,595.9 L719.6,597.4 L722.2,599.0 L724.9,600.8 L727.6,602.7 L730.3,604.7 L732.9,606.9 L735.6,609.3 L738.3,611.8 L740.9,614.4 L743.6,617.2 L746.3,620.1 L749.0,623.2 L751.6,626.5 L754.3,629.9 L757.0,633.4 L759.7,637.2 L762.3,641.0 L765.0,645.0 L767.7,649.2" fill="none" stroke="#12f012" stroke-width="2.8" stroke-linecap="round"/>
<line x1="170.5" y1="595.5" x2="170.5" y2="866" stroke="#00eef4" stroke-width="1.3"/>
<line x1="170.5" y1="595.5" x2="281.4" y2="595.5" stroke="#00b4bc" stroke-width="1.3"/>
<line x1="281.4" y1="595.5" x2="281.4" y2="818.3" stroke="#00eef4" stroke-width="1.3"/>
<path d="M170.5,595.5 L167.3,613.5 L173.7,613.5 Z" fill="#00eef4"/>
<path d="M281.4,595.5 L278.2,613.5 L284.59999999999997,613.5 Z" fill="#00eef4"/>
<path d="M281.4,818.3 L278.2,800.3 L284.59999999999997,800.3 Z" fill="#00eef4"/>
<line x1="431.1" y1="596.4" x2="431.1" y2="866" stroke="#00eef4" stroke-width="1.3"/>
<line x1="431.1" y1="596.4" x2="540.6" y2="596.4" stroke="#00b4bc" stroke-width="1.3"/>
<line x1="540.6" y1="596.4" x2="540.6" y2="817.8" stroke="#00eef4" stroke-width="1.3"/>
<path d="M431.1,596.4 L427.90000000000003,614.4 L434.3,614.4 Z" fill="#00eef4"/>
<path d="M540.6,596.4 L537.4,614.4 L543.8000000000001,614.4 Z" fill="#00eef4"/>
<path d="M540.6,817.8 L537.4,799.8 L543.8000000000001,799.8 Z" fill="#00eef4"/>
<line x1="695.4" y1="589.3" x2="695.4" y2="866" stroke="#00eef4" stroke-width="1.3"/>
<line x1="695.4" y1="589.3" x2="803.3" y2="589.3" stroke="#00b4bc" stroke-width="1.3"/>
<line x1="803.3" y1="589.3" x2="803.3" y2="810.5" stroke="#00eef4" stroke-width="1.3"/>
<path d="M695.4,589.3 L692.1999999999999,607.3 L698.6,607.3 Z" fill="#00eef4"/>
<path d="M803.3,589.3 L800.0999999999999,607.3 L806.5,607.3 Z" fill="#00eef4"/>
<path d="M803.3,810.5 L800.0999999999999,792.5 L806.5,792.5 Z" fill="#00eef4"/>
<path d="M162.0,590.0 L173.0,601.0 M162.0,601.0 L173.0,590.0" stroke="#14f014" stroke-width="2.1"/>
<path d="M287.7,813.3 L298.7,824.3 M287.7,824.3 L298.7,813.3" stroke="#14f014" stroke-width="2.1"/>
<path d="M427.0,590.9 L438.0,601.9 M427.0,601.9 L438.0,590.9" stroke="#14f014" stroke-width="2.1"/>
<path d="M552.0,812.3 L563.0,823.3 M552.0,823.3 L563.0,812.3" stroke="#14f014" stroke-width="2.1"/>
<path d="M688.5,583.8 L699.5,594.8 M688.5,594.8 L699.5,583.8" stroke="#14f014" stroke-width="2.1"/>
<path d="M806.9,804.0 L817.9,815.0 M806.9,815.0 L817.9,804.0" stroke="#14f014" stroke-width="2.1"/>
<text transform="translate(164.3,678.3) rotate(-90)" x="0" y="0" font-family="Liberation Mono" font-size="14.8" fill="#ff14ff" xml:space="preserve">[R1] 5.6634</text>
<text transform="translate(425.5,674.5) rotate(-90)" x="0" y="0" font-family="Liberation Mono" font-size="14.8" fill="#ff14ff" xml:space="preserve">[R2] 5.8625</text>
<text transform="translate(688.2,657.8) rotate(-90)" x="0" y="0" font-family="Liberation Mono" font-size="14.8" fill="#ff14ff" xml:space="preserve">[R3] 5.3899</text>
<text transform="translate(275.8,776) rotate(-90)" x="0" y="0" font-family="Liberation Mono" font-size="14.8" fill="#ff14ff" xml:space="preserve">[Y1] 0.5569</text>
<text transform="translate(534.6,755.8) rotate(-90)" x="0" y="0" font-family="Liberation Mono" font-size="14.8" fill="#ff14ff" xml:space="preserve">[Y2] 0.5527</text>
<text transform="translate(796,811.5) rotate(-90)" x="0" y="0" font-family="Liberation Mono" font-size="14.8" fill="#ff14ff" xml:space="preserve">[Y3] 0.5490</text>
</svg>
</body></html>
